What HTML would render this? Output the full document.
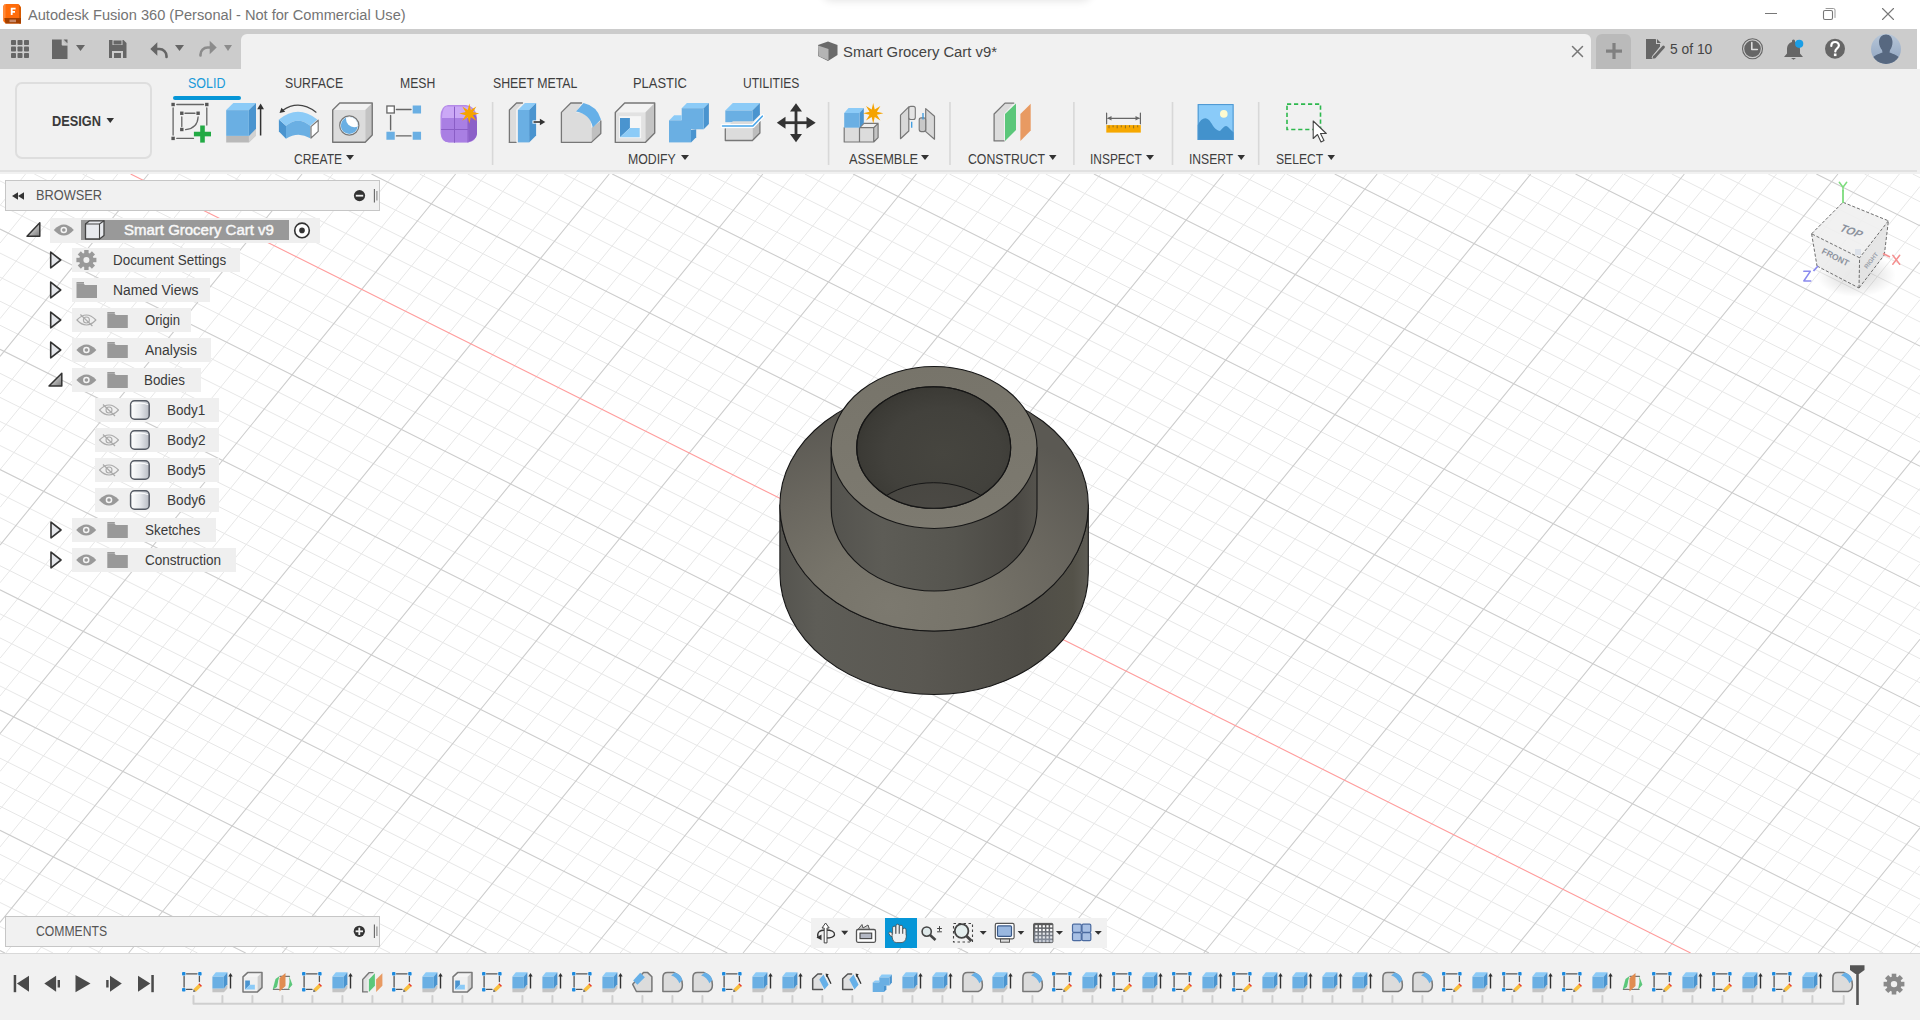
<!DOCTYPE html>
<html><head><meta charset="utf-8"><title>Autodesk Fusion 360</title><style>
*{margin:0;padding:0;box-sizing:border-box}
html,body{width:1920px;height:1020px;overflow:hidden;background:#fff;font-family:"Liberation Sans",sans-serif}
.abs{position:absolute}
.t{position:absolute;white-space:nowrap;line-height:1;transform-origin:0 0}
</style></head>
<body>
<svg class="abs" style="left:0;top:0" width="1920" height="1020"><path d="M25.59 174.00L0.00 205.44M56.31 174.00L0.00 243.17M87.03 174.00L0.00 280.91M117.74 174.00L0.00 318.64M179.18 174.00L0.00 394.11M209.90 174.00L0.00 431.85M240.61 174.00L0.00 469.58M271.33 174.00L0.00 507.32M332.77 174.00L0.00 582.79M363.49 174.00L0.00 620.52M394.20 174.00L0.00 658.26M424.92 174.00L0.00 695.99M486.36 174.00L-0.00 771.47M517.08 174.00L0.00 809.20M547.79 174.00L0.00 846.94M578.51 174.00L0.00 884.67M639.95 174.00L5.81 953.00M670.66 174.00L36.53 953.00M701.38 174.00L67.25 953.00M732.10 174.00L97.97 953.00M793.54 174.00L159.40 953.00M824.25 174.00L190.12 953.00M854.97 174.00L220.84 953.00M885.69 174.00L251.56 953.00M947.13 174.00L312.99 953.00M977.84 174.00L343.71 953.00M1008.56 174.00L374.43 953.00M1039.28 174.00L405.15 953.00M1100.71 174.00L466.58 953.00M1131.43 174.00L497.30 953.00M1162.15 174.00L528.02 953.00M1192.87 174.00L558.74 953.00M1254.30 174.00L620.17 953.00M1285.02 174.00L650.89 953.00M1315.74 174.00L681.61 953.00M1346.46 174.00L712.32 953.00M1407.89 174.00L773.76 953.00M1438.61 174.00L804.48 953.00M1469.33 174.00L835.20 953.00M1500.05 174.00L865.91 953.00M1561.48 174.00L927.35 953.00M1592.20 174.00L958.07 953.00M1622.92 174.00L988.79 953.00M1653.64 174.00L1019.50 953.00M1715.07 174.00L1080.94 953.00M1745.79 174.00L1111.66 953.00M1776.51 174.00L1142.37 953.00M1807.23 174.00L1173.09 953.00M1868.66 174.00L1234.53 953.00M1899.38 174.00L1265.25 953.00M1920.00 186.40L1295.96 953.00M1920.00 224.14L1326.68 953.00M1920.00 299.61L1388.12 953.00M1920.00 337.35L1418.84 953.00M1920.00 375.08L1449.55 953.00M1920.00 412.82L1480.27 953.00M1920.00 488.29L1541.71 953.00M1920.00 526.02L1572.42 953.00M1920.00 563.76L1603.14 953.00M1920.00 601.49L1633.86 953.00M1920.00 676.96L1695.30 953.00M1920.00 714.70L1726.01 953.00M1920.00 752.43L1756.73 953.00M1920.00 790.17L1787.45 953.00M1920.00 865.64L1848.89 953.00M1920.00 903.37L1879.60 953.00M1920.00 941.11L1910.32 953.00M1912.67 174.00L1920.00 177.66M1864.50 174.00L1920.00 201.71M1768.18 174.00L1920.00 249.81M1720.01 174.00L1920.00 273.87M1671.85 174.00L1920.00 297.92M1623.68 174.00L1920.00 321.97M1527.36 174.00L1920.00 370.07M1479.19 174.00L1920.00 394.12M1431.03 174.00L1920.00 418.17M1382.87 174.00L1920.00 442.22M1286.54 174.00L1920.00 490.33M1238.37 174.00L1920.00 514.38M1190.21 174.00L1920.00 538.43M1142.05 174.00L1920.00 562.48M1045.72 174.00L1920.00 610.58M997.55 174.00L1920.00 634.63M949.39 174.00L1920.00 658.68M901.23 174.00L1920.00 682.73M804.90 174.00L1920.00 730.84M756.73 174.00L1920.00 754.89M708.57 174.00L1920.00 778.94M660.41 174.00L1920.00 802.99M564.08 174.00L1920.00 851.09M515.91 174.00L1920.00 875.14M467.75 174.00L1920.00 899.19M419.59 174.00L1920.00 923.24M323.26 174.00L1883.26 953.00M275.10 174.00L1835.10 953.00M226.93 174.00L1786.93 953.00M178.77 174.00L1738.77 953.00M82.44 174.00L1642.44 953.00M34.28 174.00L1594.28 953.00M0.00 180.94L1546.11 953.00M0.00 204.99L1497.95 953.00M0.00 253.09L1401.62 953.00M0.00 277.14L1353.46 953.00M-0.00 301.19L1305.29 953.00M-0.00 325.24L1257.13 953.00M0.00 373.34L1160.80 953.00M0.00 397.39L1112.64 953.00M0.00 421.45L1064.47 953.00M0.00 445.50L1016.31 953.00M0.00 493.60L919.98 953.00M0.00 517.65L871.82 953.00M0.00 541.70L823.65 953.00M0.00 565.75L775.49 953.00M0.00 613.85L679.16 953.00M0.00 637.91L631.00 953.00M0.00 661.96L582.83 953.00M0.00 686.01L534.67 953.00M0.00 734.11L438.34 953.00M0.00 758.16L390.18 953.00M-0.00 782.21L342.01 953.00M0.00 806.26L293.85 953.00M0.00 854.37L197.52 953.00M0.00 878.42L149.36 953.00M0.00 902.47L101.19 953.00M0.00 926.52L53.03 953.00" stroke="#e7e7e7" stroke-width="1" fill="none"/><path d="M148.46 174.00L0.00 356.38M302.05 174.00L0.00 545.05M455.64 174.00L0.00 733.73M609.23 174.00L0.00 922.41M762.82 174.00L128.68 953.00M916.41 174.00L282.27 953.00M1070.00 174.00L435.86 953.00M1223.59 174.00L589.45 953.00M1377.18 174.00L743.04 953.00M1530.76 174.00L896.63 953.00M1684.35 174.00L1050.22 953.00M1837.94 174.00L1203.81 953.00M1920.00 261.87L1357.40 953.00M1920.00 450.55L1510.99 953.00M1920.00 639.23L1664.58 953.00M1920.00 827.90L1818.17 953.00M1816.34 174.00L1920.00 225.76M1575.52 174.00L1920.00 346.02M1334.70 174.00L1920.00 466.27M1093.88 174.00L1920.00 586.53M853.06 174.00L1920.00 706.78M612.24 174.00L1920.00 827.04M371.42 174.00L1920.00 947.30M0.00 229.04L1449.78 953.00M0.00 349.29L1208.96 953.00M0.00 469.55L968.15 953.00M0.00 589.80L727.33 953.00M0.00 710.06L486.51 953.00M-0.00 830.31L245.69 953.00M0.00 950.57L4.87 953.00" stroke="#cdcdcd" stroke-width="1.1" fill="none"/><path d="M130.60 174.00L1690.60 953.00" stroke="#ff9c9c" stroke-width="1.1" fill="none"/></svg>
<div class="abs" style="left:0;top:0;width:1920px;height:29px;background:#fff"></div>
<div class="abs" style="left:822px;top:-20px;width:270px;height:20px;background:#fff;box-shadow:0 1px 9px rgba(0,0,0,0.11);border-radius:10px"></div>
<div class="abs" style="left:0;top:29px;width:1917px;height:40px;background:#cccccc"></div>
<div class="abs" style="left:241px;top:34px;width:1350px;height:35px;background:#f1f1f1;border-radius:6px 6px 0 0"></div>
<div class="abs" style="left:1596px;top:34px;width:35px;height:35px;background:#bababa;border-radius:6px 6px 0 0"></div>
<div class="abs" style="left:0;top:69px;width:1920px;height:105px;background:#f1f1f1"></div>
<div class="abs" style="left:0;top:170px;width:1917px;height:2px;background:#e1e1e1"></div>
<div class="abs" style="left:15px;top:82px;width:137px;height:77px;border:2px solid #dedede;border-radius:7px"></div>
<div class="abs" style="left:173px;top:96px;width:68px;height:4px;background:#0696d7;border-radius:2px"></div>
<div class="abs" style="left:0;top:953px;width:1920px;height:67px;background:#f1f1f1;border-top:1.5px solid #d9d9d9"></div>
<div class="abs" style="left:5px;top:180px;width:375px;height:31px;background:#f1f1f1;border:1px solid #c6c6c6"></div>
<div class="abs" style="left:5px;top:916px;width:375px;height:31px;background:#f1f1f1;border:1px solid #c6c6c6"></div>
<div class="abs" style="left:50px;top:218px;width:270px;height:25px;background:#efefef"></div>
<div class="abs" style="left:72px;top:248px;width:168px;height:24px;background:#efefef"></div>
<div class="abs" style="left:72px;top:278px;width:138px;height:24px;background:#efefef"></div>
<div class="abs" style="left:72px;top:308px;width:119px;height:24px;background:#efefef"></div>
<div class="abs" style="left:72px;top:338px;width:139px;height:24px;background:#efefef"></div>
<div class="abs" style="left:72px;top:368px;width:129px;height:24px;background:#efefef"></div>
<div class="abs" style="left:95px;top:398px;width:124px;height:24px;background:#efefef"></div>
<div class="abs" style="left:95px;top:428px;width:124px;height:24px;background:#efefef"></div>
<div class="abs" style="left:95px;top:458px;width:124px;height:24px;background:#efefef"></div>
<div class="abs" style="left:95px;top:488px;width:124px;height:24px;background:#efefef"></div>
<div class="abs" style="left:72px;top:518px;width:144px;height:24px;background:#efefef"></div>
<div class="abs" style="left:72px;top:548px;width:164px;height:24px;background:#efefef"></div>
<div class="abs" style="left:81px;top:220px;width:208px;height:20px;background:#999999"></div>
<div class="abs" style="left:811px;top:918px;width:296px;height:30px;background:#f1f1f1"></div>
<div class="abs" style="left:885px;top:918px;width:32px;height:30px;background:#0696d7"></div>
<svg class="abs" style="left:0;top:0" width="1920" height="1020"><path d="M6 4H18.5L21 7.5V23.5H5.5L3.2 21V6.5Q3.5 4 6 4Z" fill="#ff6c0a"/><path d="M19 4.5L21 7.5V23.5H19Z" fill="#d65a00"/><path d="M4.5 18H21V23.5H5.5Z" fill="#a34000"/><path d="M3.2 6.5Q3.5 4.2 5.5 4V18H3.2Z" fill="#ff8a3a"/><rect x="9.50" y="19.60" width="6.50" height="2.60" fill="#c98a6a"/><path d="M10.8 7.8H15.6V9.6H12.6V11H15V12.7H12.6V15H10.8Z" fill="#ffffff"/><line x1="1765.00" y1="13.50" x2="1777.00" y2="13.50" stroke="#777" stroke-width="1"/><rect x="1823.50" y="10.50" width="9.00" height="9.00" fill="none" stroke="#777" stroke-width="1.1" rx="1.5"/><path d="M1826 8.5h7.5a1.5 1.5 0 0 1 1.5 1.5v7.5" fill="none" stroke="#999" stroke-width="1" stroke-linejoin="round" stroke-linecap="round"/><path d="M1882.5 8.5l11 11M1893.5 8.5l-11 11" fill="none" stroke="#777" stroke-width="1.1" stroke-linejoin="round" stroke-linecap="round"/><rect x="11.00" y="40.00" width="5.00" height="5.00" fill="#666666" rx="0.8"/><rect x="11.00" y="46.50" width="5.00" height="5.00" fill="#666666" rx="0.8"/><rect x="11.00" y="53.00" width="5.00" height="5.00" fill="#666666" rx="0.8"/><rect x="17.50" y="40.00" width="5.00" height="5.00" fill="#666666" rx="0.8"/><rect x="17.50" y="46.50" width="5.00" height="5.00" fill="#666666" rx="0.8"/><rect x="17.50" y="53.00" width="5.00" height="5.00" fill="#666666" rx="0.8"/><rect x="24.00" y="40.00" width="5.00" height="5.00" fill="#666666" rx="0.8"/><rect x="24.00" y="46.50" width="5.00" height="5.00" fill="#666666" rx="0.8"/><rect x="24.00" y="53.00" width="5.00" height="5.00" fill="#666666" rx="0.8"/><path d="M52 39.5h10l5.5 5.5v14h-15.5z" fill="#666666"/><path d="M62 39.5v5.5h5.5" fill="#cccccc"/><path d="M63.5 39.5l4 4v-4z" fill="#666666"/><path d="M62.2 39.5v5.6h5.3" fill="none" stroke="#cccccc" stroke-width="1.0" stroke-linejoin="round" stroke-linecap="round"/><polygon points="76.00,45.00 85.00,45.00 80.50,51.00" fill="#666666"/><path d="M109 40h14.5l3 3v15h-17.5z" fill="#666666"/><rect x="112.50" y="40.00" width="10.00" height="5.00" fill="#cccccc"/><rect x="113.50" y="40.50" width="8.00" height="4.00" fill="#666666"/><rect x="112.00" y="51.00" width="11.00" height="7.00" fill="#cccccc"/><rect x="114.00" y="53.00" width="7.00" height="5.00" fill="#666666"/><path d="M155 49 h4.5 a7 7 0 0 1 7 7 v1" fill="none" stroke="#666666" stroke-width="2.6" stroke-linejoin="round" stroke-linecap="round"/><polygon points="150.30,49.00 157.30,42.30 157.30,55.70" fill="#666666"/><polygon points="175.00,45.00 184.00,45.00 179.50,51.00" fill="#666666"/><path d="M212 47.5 h-4.5 a7 7 0 0 0 -7 7 v1" fill="none" stroke="#8c8c8c" stroke-width="2.6" stroke-linejoin="round" stroke-linecap="round"/><polygon points="216.70,47.50 209.70,40.80 209.70,54.20" fill="#8c8c8c"/><polygon points="224.00,45.00 232.00,45.00 228.00,51.00" fill="#8c8c8c"/><polygon points="818.00,45.00 828.00,41.50 837.50,45.00 837.50,55.00 828.00,61.00 818.00,56.00" fill="#6a6a6a"/><polygon points="818.00,45.50 828.50,49.00 828.50,60.50 818.50,56.00" fill="#b4b4b4"/><path d="M1572.5 46.5l10 10M1582.5 46.5l-10 10" fill="none" stroke="#777" stroke-width="1.5" stroke-linejoin="round" stroke-linecap="round"/><rect x="1606.00" y="49.50" width="16.00" height="3.20" fill="#808080"/><rect x="1612.40" y="43.00" width="3.20" height="16.00" fill="#808080"/><path d="M1646 39h9.5l4.5 4.5v3l-8 10v2.5h-6z" fill="#666666"/><path d="M1656 39v5h4.5" fill="#cccccc"/><polygon points="1657.00,39.00 1661.00,43.00 1657.00,43.00" fill="#666666"/><path d="M1654 57.5l9-10" fill="none" stroke="#cccccc" stroke-width="4.5" stroke-linejoin="round" stroke-linecap="round"/><path d="M1654.5 57l9-10" fill="none" stroke="#666666" stroke-width="2.8" stroke-linejoin="round" stroke-linecap="round"/><polygon points="1652.50,59.00 1653.00,55.50 1655.50,57.50" fill="#666666"/><circle cx="1752.50" cy="48.80" r="10.00" fill="none" stroke="#666" stroke-width="1.1"/><circle cx="1752.50" cy="48.80" r="8.30" fill="#666666"/><path d="M1751.8 42.5v7h5.5" fill="none" stroke="#dddddd" stroke-width="1.6" stroke-linejoin="round" stroke-linecap="round"/><path d="M1793.5 39.5c1 0 1.5 .8 1.5 1.5v1c3.5 1 5 4 5 7.5v4l3 3.5h-19l3-3.5v-4c0-3.5 1.5-6.5 5-7.5v-1c0-.7.5-1.5 1.5-1.5z" fill="#666666"/><path d="M1791 58h5l-2.5 1.8z" fill="#666666"/><circle cx="1799.20" cy="43.80" r="4.10" fill="#1a9ee6"/><circle cx="1835.00" cy="48.80" r="10.00" fill="#666666"/><path d="M1831.3 46c0-2.5 1.7-4 3.8-4s3.8 1.5 3.8 3.6c0 2.8-3.6 2.8-3.6 5.8" fill="none" stroke="#ffffff" stroke-width="2.2" stroke-linejoin="round" stroke-linecap="round" stroke-linecap="butt"/><rect x="1833.90" y="53.50" width="2.60" height="2.60" fill="#ffffff"/><defs><linearGradient id="avg" x1="0" y1="0" x2="0" y2="1"><stop offset="0" stop-color="#b7c6d8"/><stop offset="1" stop-color="#8fa4c0"/></linearGradient></defs><circle cx="1886.00" cy="49.00" r="15.00" fill="url(#avg)"/><clipPath id="avc"><circle cx="1886" cy="49" r="15"/></clipPath><path d="M1886 34.5c4 0 6.5 3 6.5 7.5 0 3.5-1 6-2.5 8l-.5 2.5c4 1.5 9 3 10 6l-3 10h-21l-3-10c1-3 6-4.5 10-6l-.5-2.5c-1.5-2-3-4.5-3-8 0-4.5 3-7.5 7-7.5z" fill="#576880" clip-path="url(#avc)"/><rect x="171.40" y="102.80" width="3.40" height="3.40" fill="#555555"/><rect x="205.10" y="102.80" width="3.40" height="3.40" fill="#555555"/><rect x="171.40" y="136.70" width="3.40" height="3.40" fill="#555555"/><rect x="180.10" y="111.55" width="3.40" height="3.40" fill="#555555"/><rect x="196.40" y="111.55" width="3.40" height="3.40" fill="#555555"/><rect x="180.10" y="127.80" width="3.40" height="3.40" fill="#555555"/><path d="M176.8 104.5H203.5M173.1 108V135M206.8 108V125M176.8 138.4H193.5M185 113.25H195M181.8 117V126.5M198.1 117Q197.5 128.5 185.6 129.6" fill="none" stroke="#666" stroke-width="1.3" stroke-linejoin="round" stroke-linecap="round"/><rect x="200.20" y="125.50" width="4.60" height="17.10" fill="#22aa44"/><rect x="193.90" y="131.75" width="17.10" height="4.60" fill="#22aa44"/><polygon points="226.20,135.90 248.90,135.90 256.00,128.80 256.00,135.50 248.90,142.60 226.20,142.60" fill="#b9b9b9"/><polygon points="248.90,135.90 256.00,128.80 256.00,135.50 248.90,142.60" fill="#d2d2d2"/><polygon points="226.20,110.10 233.30,103.00 256.00,103.00 248.90,110.10" fill="#8ccbf7"/><polygon points="248.90,110.10 256.00,103.00 256.00,128.80 248.90,135.90" fill="#4a94cf"/><polygon points="226.20,110.10 248.90,110.10 248.90,135.90 226.20,135.90" fill="#6aafe3"/><line x1="260.60" y1="108.00" x2="260.60" y2="135.50" stroke="#333333" stroke-width="1.5"/><polygon points="257.20,109.20 260.60,103.60 264.00,109.20" fill="#333333"/><path d="M316 112.2Q299 99 282.5 110.5" fill="none" stroke="#444" stroke-width="1.2" stroke-linejoin="round" stroke-linecap="round"/><polygon points="279.50,113.00 281.50,107.80 285.20,111.80" fill="#333"/><polygon points="278.90,119.50 286.00,125.80 286.00,138.80 278.90,131.50" fill="#4a94cf"/><path d="M278.9 119.5Q298 104 317.3 119.5L310.3 125.8Q298 115.5 286 125.8Z" fill="#8ccbf7"/><path d="M286 125.8Q298 115.5 310.3 125.8V138.3Q298 131 286 138.8Z" fill="#6aafe3"/><polygon points="311.00,126.60 318.20,120.20 318.20,131.40 311.00,138.00" fill="#ffffff" stroke="#777" stroke-width="1.2" stroke-linejoin="round"/><polygon points="332.70,110.10 339.75,103.00 372.25,103.00 365.20,110.10" fill="#f2f2f2"/><polygon points="365.20,110.10 372.25,103.00 372.25,135.10 365.20,142.20" fill="#c4c4c4"/><polygon points="332.70,110.10 365.20,110.10 365.20,142.20 332.70,142.20" fill="#dcdcdc"/><polygon points="332.70,110.10 339.75,103.00 372.25,103.00 372.25,135.10 365.20,142.20 332.70,142.20" fill="none" stroke="#777777" stroke-width="1.4" stroke-linejoin="round"/><circle cx="349.30" cy="125.50" r="9.60" fill="#ffffff" stroke="#777" stroke-width="1.2"/><clipPath id="hc"><circle cx="349.3" cy="125.5" r="8.5"/></clipPath><circle cx="349.30" cy="125.50" r="8.50" fill="#6aafe3"/><circle cx="354.20" cy="119.00" r="8.20" fill="#ffffff" clip-path="url(#hc)"/><rect x="386.90" y="106.00" width="7.40" height="7.00" fill="#ffffff" stroke="#666" stroke-width="1.3"/><rect x="412.70" y="105.50" width="8.35" height="8.00" fill="#6aafe3"/><rect x="386.40" y="131.75" width="8.35" height="8.00" fill="#6aafe3"/><rect x="412.70" y="131.75" width="8.35" height="8.00" fill="#6aafe3"/><path d="M396.4 109.5H411M390.6 115.5V129.7M396.4 135.9H411" fill="none" stroke="#666" stroke-width="1.4" stroke-linejoin="round" stroke-linecap="round"/><path d="M448 105H466Q476 106 477 118V134Q476 141 468 142.5H449Q441 142 440.5 133V116Q441 106 448 105Z" fill="#b48ae8"/><path d="M446 106.5H466Q473 107 474 113L468 118H442Q442.5 108 446 106.5Z" fill="#cba8f6"/><path d="M468 118L474.5 113Q477 117 477 122V134Q476 140 468.5 142Z" fill="#8c60c8"/><path d="M442 118H468V142.3H449Q442 142 441.5 134Z" fill="#a97fe3"/><path d="M454.5 107V142.3M441.5 129.5H468M468 118V142" fill="none" stroke="#8a5ec6" stroke-width="1.0" stroke-linejoin="round" stroke-linecap="round"/><polygon points="469.30,103.60 470.83,109.90 476.37,106.53 473.00,112.07 479.30,113.60 473.00,115.13 476.37,120.67 470.83,117.30 469.30,123.60 467.77,117.30 462.23,120.67 465.60,115.13 459.30,113.60 465.60,112.07 462.23,106.53 467.77,109.90" fill="#f5a300"/><line x1="492.60" y1="102.00" x2="492.60" y2="165.00" stroke="#d8d8d8" stroke-width="1.6"/><line x1="828.60" y1="102.00" x2="828.60" y2="165.00" stroke="#d8d8d8" stroke-width="1.6"/><line x1="950.00" y1="102.00" x2="950.00" y2="165.00" stroke="#d8d8d8" stroke-width="1.6"/><line x1="1073.90" y1="102.00" x2="1073.90" y2="165.00" stroke="#d8d8d8" stroke-width="1.6"/><line x1="1172.50" y1="102.00" x2="1172.50" y2="165.00" stroke="#d8d8d8" stroke-width="1.6"/><line x1="1258.70" y1="102.00" x2="1258.70" y2="165.00" stroke="#d8d8d8" stroke-width="1.6"/><polygon points="509.40,110.00 516.50,103.00 522.50,103.00 516.00,110.00 516.00,142.40 509.40,142.40" fill="#dcdcdc"/><path d="M509.4 142.4V110L516.5 103H522.5" fill="none" stroke="#777777" stroke-width="1.3" stroke-linejoin="round" stroke-linecap="round"/><path d="M509.4 142.4H516" fill="none" stroke="#777777" stroke-width="1.3" stroke-linejoin="round" stroke-linecap="round"/><polygon points="517.90,110.00 524.90,103.00 536.10,103.00 529.10,110.00" fill="#8ccbf7"/><polygon points="529.10,110.00 536.10,103.00 536.10,135.40 529.10,142.40" fill="#4a94cf"/><polygon points="517.90,110.00 529.10,110.00 529.10,142.40 517.90,142.40" fill="#6aafe3"/><line x1="532.50" y1="122.00" x2="541.00" y2="122.00" stroke="#ffffff" stroke-width="3.2"/><line x1="533.50" y1="122.00" x2="541.00" y2="122.00" stroke="#333333" stroke-width="1.6"/><polygon points="539.90,118.80 545.30,122.00 539.90,125.20" fill="#333333"/><polygon points="591.40,127.90 600.80,120.80 600.80,133.50 591.40,142.40" fill="#c0c0c0"/><path d="M561.4 142.4V112.4L570.8 103H581.6L576 112.4Q591.4 112.4 591.4 127.9V142.4Z" fill="#dcdcdc"/><path d="M576 111.5L583.5 103Q597 106 601 119.4L592.8 127.4Q590 114 576 111.5Z" fill="#66b0e8"/><path d="M561.4 112.4V142.4H591.4L600.8 133.5V120.8M561.4 112.4L570.8 103H581.6" fill="none" stroke="#777777" stroke-width="1.3" stroke-linejoin="round" stroke-linecap="round"/><polygon points="615.30,112.40 624.70,103.00 654.70,103.00 645.30,112.40" fill="#f3f3f3"/><polygon points="645.30,112.40 654.70,103.00 654.70,133.00 645.30,142.40" fill="#c4c4c4"/><polygon points="615.30,112.40 645.30,112.40 645.30,142.40 615.30,142.40" fill="#e2e2e2"/><polygon points="615.30,112.40 624.70,103.00 654.70,103.00 654.70,133.00 645.30,142.40 615.30,142.40" fill="none" stroke="#777777" stroke-width="1.4" stroke-linejoin="round"/><rect x="619.10" y="116.10" width="22.00" height="22.10" fill="#f6f6f6"/><polygon points="620.00,118.00 629.90,118.00 629.90,127.90 620.00,137.20" fill="#4a94cf"/><polygon points="629.90,127.90 639.70,127.90 639.70,137.20 620.00,137.20" fill="#8ccbf7"/><polygon points="681.70,108.20 686.90,103.00 708.90,103.00 703.70,108.20" fill="#8ccbf7"/><polygon points="703.70,108.20 708.90,103.00 708.90,124.10 703.70,129.30" fill="#4a94cf"/><polygon points="681.70,108.20 703.70,108.20 703.70,129.30 681.70,129.30" fill="#6aafe3"/><polygon points="669.00,120.40 674.20,115.20 681.70,115.20 681.70,120.40" fill="#8ccbf7"/><polygon points="691.00,130.00 696.20,129.30 696.20,137.20 691.00,142.40" fill="#4a94cf"/><rect x="669.00" y="120.40" width="22.00" height="22.00" fill="#6aafe3"/><rect x="681.70" y="120.40" width="9.30" height="9.00" fill="#6aafe3"/><polygon points="725.30,110.50 732.80,103.00 759.90,103.00 752.40,110.50" fill="#8ccbf7"/><polygon points="752.40,110.50 759.90,103.00 759.90,114.70 752.40,122.20" fill="#4a94cf"/><polygon points="725.30,110.50 752.40,110.50 752.40,122.20 725.30,122.20" fill="#6aafe3"/><polygon points="725.30,128.80 732.80,121.30 759.90,121.30 752.40,128.80" fill="#dcdcdc"/><polygon points="752.40,128.80 759.90,121.30 759.90,133.00 752.40,140.50" fill="#bdbdbd"/><polygon points="725.30,128.80 752.40,128.80 752.40,140.50 725.30,140.50" fill="#dcdcdc"/><path d="M725.3 128.8V140.5H752.4L759.9 133V121.5" fill="none" stroke="#777777" stroke-width="1.3" stroke-linejoin="round" stroke-linecap="round"/><path d="M722.5 126H752.9L762.3 116.2" fill="none" stroke="#ffffff" stroke-width="4" stroke-linejoin="round" stroke-linecap="round"/><path d="M722.5 126H752.9L762.3 116.2" fill="none" stroke="#4aa6ea" stroke-width="1.6" stroke-linejoin="round" stroke-linecap="round"/><line x1="796.00" y1="108.00" x2="796.00" y2="137.50" stroke="#333333" stroke-width="2.8"/><line x1="781.00" y1="122.70" x2="811.50" y2="122.70" stroke="#333333" stroke-width="2.8"/><polygon points="790.00,111.50 796.00,103.30 802.00,111.50" fill="#333333"/><polygon points="790.00,134.00 796.00,142.20 802.00,134.00" fill="#333333"/><polygon points="785.50,116.70 776.80,122.70 785.50,128.70" fill="#333333"/><polygon points="806.50,116.70 815.70,122.70 806.50,128.70" fill="#333333"/><polygon points="844.20,127.70 844.20,127.70 859.50,127.70 859.50,127.70" fill="#dcdcdc"/><polygon points="859.50,127.70 859.50,127.70 859.50,142.00 859.50,142.00" fill="#dcdcdc"/><polygon points="844.20,127.70 859.50,127.70 859.50,142.00 844.20,142.00" fill="#dcdcdc"/><polygon points="859.50,127.70 863.90,123.40 878.10,123.40 873.70,127.70" fill="#eeeeee"/><polygon points="873.70,127.70 878.10,123.40 878.10,137.70 873.70,142.00" fill="#c4c4c4"/><polygon points="859.50,127.70 873.70,127.70 873.70,142.00 859.50,142.00" fill="#dcdcdc"/><path d="M844.2 127.7V142H873.7L878.1 137.6V123.4H863.9L859.5 127.7M859.5 127.7V142M859.5 127.7H873.7L878.1 123.4M873.7 127.7V142" fill="none" stroke="#777777" stroke-width="1.2" stroke-linejoin="round" stroke-linecap="round"/><polygon points="844.20,113.00 848.50,108.00 863.80,108.00 859.50,113.00" fill="#8ccbf7"/><polygon points="859.50,113.00 863.80,108.00 863.80,122.70 859.50,127.70" fill="#4a94cf"/><polygon points="844.20,113.00 859.50,113.00 859.50,127.70 844.20,127.70" fill="#6aafe3"/><polygon points="873.20,103.00 874.73,109.50 880.41,105.99 876.90,111.67 883.40,113.20 876.90,114.73 880.41,120.41 874.73,116.90 873.20,123.40 871.67,116.90 865.99,120.41 869.50,114.73 863.00,113.20 869.50,111.67 865.99,105.99 871.67,109.50" fill="#f5a300"/><polygon points="900.50,115.10 908.80,106.90 908.80,131.00 900.50,138.70" fill="#d8d8d8" stroke="#777777" stroke-width="1.2" stroke-linejoin="round"/><rect x="908.80" y="106.40" width="6.50" height="13.10" fill="#e4e4e4" stroke="#777" stroke-width="1.1" rx="2"/><line x1="911.70" y1="121.70" x2="911.70" y2="127.70" stroke="#3a9ae0" stroke-width="1.3"/><polygon points="925.70,108.60 934.50,116.20 934.50,139.20 925.70,131.60" fill="#d8d8d8" stroke="#777777" stroke-width="1.2" stroke-linejoin="round"/><rect x="919.20" y="117.90" width="6.50" height="13.70" fill="#c8c8c8" stroke="#777" stroke-width="1.1" rx="2"/><line x1="923.00" y1="113.00" x2="923.00" y2="119.50" stroke="#3a9ae0" stroke-width="1.3"/><polygon points="994.10,114.00 1005.00,103.10 1013.80,103.10 1004.00,114.00 1004.00,140.90 994.10,140.90" fill="#dcdcdc"/><path d="M1004 140.9H994.1V114L1005 103.1H1013.8" fill="none" stroke="#777777" stroke-width="1.3" stroke-linejoin="round" stroke-linecap="round"/><polygon points="1005.00,114.00 1016.00,103.40 1016.00,129.90 1005.00,140.90" fill="#5bc77a"/><polygon points="1020.40,114.00 1030.70,103.70 1030.70,130.50 1020.40,140.90" fill="#e89a62"/><rect x="1106.30" y="125.10" width="34.50" height="7.50" fill="#f6a800"/><line x1="1109.00" y1="125.30" x2="1109.00" y2="128.30" stroke="#8a6a20" stroke-width="0.9"/><line x1="1113.10" y1="125.30" x2="1113.10" y2="127.30" stroke="#8a6a20" stroke-width="0.9"/><line x1="1117.20" y1="125.30" x2="1117.20" y2="128.30" stroke="#8a6a20" stroke-width="0.9"/><line x1="1121.30" y1="125.30" x2="1121.30" y2="127.30" stroke="#8a6a20" stroke-width="0.9"/><line x1="1125.40" y1="125.30" x2="1125.40" y2="128.30" stroke="#8a6a20" stroke-width="0.9"/><line x1="1129.50" y1="125.30" x2="1129.50" y2="127.30" stroke="#8a6a20" stroke-width="0.9"/><line x1="1133.60" y1="125.30" x2="1133.60" y2="128.30" stroke="#8a6a20" stroke-width="0.9"/><line x1="1137.70" y1="125.30" x2="1137.70" y2="127.30" stroke="#8a6a20" stroke-width="0.9"/><path d="M1106.6 113V123.8M1140.4 113V123.8M1108 118.3H1139" fill="none" stroke="#666" stroke-width="1.2" stroke-linejoin="round" stroke-linecap="round"/><polygon points="1107.30,118.30 1111.50,116.00 1111.50,120.60" fill="#666"/><polygon points="1139.70,118.30 1135.50,116.00 1135.50,120.60" fill="#666"/><rect x="1197.70" y="104.10" width="35.90" height="35.90" fill="#8acbf9"/><path d="M1197.7 125C1201 118 1206 116 1209.7 120.7C1213 125 1214.5 130 1220 131C1223 128 1225 124 1228 127C1230 129 1232 131 1233.6 132.5V140H1197.7Z" fill="#4392cc"/><rect x="1198.20" y="104.60" width="34.90" height="34.90" fill="none" stroke="#4a94cf" stroke-width="1"/><circle cx="1223.80" cy="113.90" r="3.80" fill="#fffbd0"/><rect x="1287.00" y="104.10" width="33.50" height="25.40" fill="none" stroke="#2db84d" stroke-width="1.6" stroke-dasharray="4.2 2.8"/><path d="M1313.2 121V138.5L1317.5 134.5L1321 142L1324 140.5L1320.5 133.5H1326.3Z" fill="#ffffff" stroke="#444" stroke-width="1.1" stroke-linejoin="round" stroke-linecap="round"/><polygon points="346.00,155.00 354.00,155.00 350.00,160.00" fill="#333333"/><polygon points="681.00,155.00 689.00,155.00 685.00,160.00" fill="#333333"/><polygon points="921.00,155.00 929.00,155.00 925.00,160.00" fill="#333333"/><polygon points="1049.00,155.00 1056.50,155.00 1052.75,160.00" fill="#333333"/><polygon points="1146.00,155.00 1154.00,155.00 1150.00,160.00" fill="#333333"/><polygon points="1237.50,155.00 1245.00,155.00 1241.25,160.00" fill="#333333"/><polygon points="1327.50,155.00 1335.00,155.00 1331.25,160.00" fill="#333333"/><polygon points="106.50,118.00 114.00,118.00 110.25,123.00" fill="#333333"/><polygon points="12.00,196.00 18.00,192.30 18.00,199.70" fill="#333"/><polygon points="18.00,196.00 24.00,192.30 24.00,199.70" fill="#333"/><circle cx="359.50" cy="195.60" r="5.60" fill="#333333"/><rect x="355.80" y="194.80" width="7.40" height="1.80" fill="#f1f1f1"/><line x1="374.40" y1="189.00" x2="374.40" y2="202.50" stroke="#666" stroke-width="1.1"/><line x1="376.90" y1="191.00" x2="376.90" y2="200.50" stroke="#888" stroke-width="1.1"/><circle cx="359.30" cy="931.30" r="5.60" fill="#333333"/><rect x="355.60" y="930.40" width="7.40" height="1.80" fill="#f1f1f1"/><rect x="358.40" y="927.60" width="1.80" height="7.40" fill="#f1f1f1"/><line x1="374.40" y1="924.50" x2="374.40" y2="938.00" stroke="#666" stroke-width="1.1"/><line x1="376.90" y1="926.50" x2="376.90" y2="936.00" stroke="#888" stroke-width="1.1"/><defs><linearGradient id="tg" x1="0" y1="0" x2="1" y2="1"><stop offset="0" stop-color="#ffffff"/><stop offset="1" stop-color="#777777"/></linearGradient></defs><polygon points="39.80,222.80 39.80,236.20 27.00,236.20" fill="url(#tg)" stroke="#333" stroke-width="1.5" stroke-linejoin="round"/><path d="M53.80 230.00Q63.80 219.00 73.80 230.00Q63.80 241.00 53.80 230.00Z" fill="#999999"/><circle cx="63.80" cy="230.00" r="3.30" fill="#f4f4f4"/><circle cx="63.80" cy="230.00" r="1.80" fill="#999999"/><polygon points="85.50,224.00 89.50,220.80 104.00,220.80 104.00,235.50 99.50,239.00 85.50,239.00" fill="#e8eaee" stroke="#444" stroke-width="1.3" stroke-linejoin="round"/><path d="M85.5 224H99.5V239M99.5 224L104 220.8" fill="none" stroke="#444" stroke-width="1.1" stroke-linejoin="round" stroke-linecap="round"/><circle cx="302.00" cy="230.40" r="7.30" fill="#ffffff" stroke="#333" stroke-width="1.6"/><circle cx="302.00" cy="230.40" r="2.80" fill="#333333"/><rect x="84.20" y="250.00" width="4.4" height="5" fill="#999999" transform="rotate(0 86.4 260)"/><rect x="84.20" y="250.00" width="4.4" height="5" fill="#999999" transform="rotate(45 86.4 260)"/><rect x="84.20" y="250.00" width="4.4" height="5" fill="#999999" transform="rotate(90 86.4 260)"/><rect x="84.20" y="250.00" width="4.4" height="5" fill="#999999" transform="rotate(135 86.4 260)"/><rect x="84.20" y="250.00" width="4.4" height="5" fill="#999999" transform="rotate(180 86.4 260)"/><rect x="84.20" y="250.00" width="4.4" height="5" fill="#999999" transform="rotate(225 86.4 260)"/><rect x="84.20" y="250.00" width="4.4" height="5" fill="#999999" transform="rotate(270 86.4 260)"/><rect x="84.20" y="250.00" width="4.4" height="5" fill="#999999" transform="rotate(315 86.4 260)"/><circle cx="86.40" cy="260.00" r="7.30" fill="#999999"/><circle cx="86.40" cy="260.00" r="3.00" fill="#efefef"/><path d="M76.50 283.50h7l1.5 1.5h12v13h-20.5z" fill="#999999"/><rect x="76.50" y="282.00" width="7.50" height="1.60" fill="#999999"/><path d="M76.90 320.00Q86.40 310.00 95.90 320.00Q86.40 330.00 76.90 320.00Z" fill="none" stroke="#aaaaaa" stroke-width="1.1" stroke-linejoin="round" stroke-linecap="round"/><circle cx="86.40" cy="320.00" r="3.00" fill="none" stroke="#aaaaaa" stroke-width="1.1"/><line x1="80.40" y1="314.50" x2="92.40" y2="326.00" stroke="#aaaaaa" stroke-width="1.2"/><path d="M107.30 313.50h7l1.5 1.5h12v13h-20.5z" fill="#999999"/><rect x="107.30" y="312.00" width="7.50" height="1.60" fill="#999999"/><path d="M76.40 350.00Q86.40 339.00 96.40 350.00Q86.40 361.00 76.40 350.00Z" fill="#999999"/><circle cx="86.40" cy="350.00" r="3.30" fill="#f4f4f4"/><circle cx="86.40" cy="350.00" r="1.80" fill="#999999"/><path d="M107.30 343.50h7l1.5 1.5h12v13h-20.5z" fill="#999999"/><rect x="107.30" y="342.00" width="7.50" height="1.60" fill="#999999"/><path d="M76.40 380.00Q86.40 369.00 96.40 380.00Q86.40 391.00 76.40 380.00Z" fill="#999999"/><circle cx="86.40" cy="380.00" r="3.30" fill="#f4f4f4"/><circle cx="86.40" cy="380.00" r="1.80" fill="#999999"/><path d="M107.30 373.50h7l1.5 1.5h12v13h-20.5z" fill="#999999"/><rect x="107.30" y="372.00" width="7.50" height="1.60" fill="#999999"/><polygon points="50.70,252.15 60.70,260.00 50.70,267.85" fill="#e4e6ea" stroke="#333" stroke-width="1.6" stroke-linejoin="round"/><polygon points="50.70,282.15 60.70,290.00 50.70,297.85" fill="#e4e6ea" stroke="#333" stroke-width="1.6" stroke-linejoin="round"/><polygon points="50.70,312.15 60.70,320.00 50.70,327.85" fill="#e4e6ea" stroke="#333" stroke-width="1.6" stroke-linejoin="round"/><polygon points="50.70,342.15 60.70,350.00 50.70,357.85" fill="#e4e6ea" stroke="#333" stroke-width="1.6" stroke-linejoin="round"/><defs><linearGradient id="tg" x1="0" y1="0" x2="1" y2="1"><stop offset="0" stop-color="#ffffff"/><stop offset="1" stop-color="#777777"/></linearGradient></defs><polygon points="61.80,373.20 61.80,386.00 49.00,386.00" fill="url(#tg)" stroke="#333" stroke-width="1.5" stroke-linejoin="round"/><path d="M99.50 410.00Q109.00 400.00 118.50 410.00Q109.00 420.00 99.50 410.00Z" fill="none" stroke="#aaaaaa" stroke-width="1.1" stroke-linejoin="round" stroke-linecap="round"/><circle cx="109.00" cy="410.00" r="3.00" fill="none" stroke="#aaaaaa" stroke-width="1.1"/><line x1="103.00" y1="404.50" x2="115.00" y2="416.00" stroke="#aaaaaa" stroke-width="1.2"/><defs><linearGradient id="bg" x1="0" y1="0" x2="1" y2="0"><stop offset="0" stop-color="#ffffff"/><stop offset="0.5" stop-color="#e6e8ec"/><stop offset="1" stop-color="#b8bcc4"/></linearGradient></defs><rect x="130.60" y="400.80" width="18.60" height="18.40" fill="url(#bg)" stroke="#555a64" stroke-width="1.5" rx="4"/><path d="M131.80 404.50Q139.80 401.50 147.80 404.50" fill="none" stroke="#ffffff" stroke-width="1.0" stroke-linejoin="round" stroke-linecap="round"/><path d="M99.50 440.00Q109.00 430.00 118.50 440.00Q109.00 450.00 99.50 440.00Z" fill="none" stroke="#aaaaaa" stroke-width="1.1" stroke-linejoin="round" stroke-linecap="round"/><circle cx="109.00" cy="440.00" r="3.00" fill="none" stroke="#aaaaaa" stroke-width="1.1"/><line x1="103.00" y1="434.50" x2="115.00" y2="446.00" stroke="#aaaaaa" stroke-width="1.2"/><defs><linearGradient id="bg" x1="0" y1="0" x2="1" y2="0"><stop offset="0" stop-color="#ffffff"/><stop offset="0.5" stop-color="#e6e8ec"/><stop offset="1" stop-color="#b8bcc4"/></linearGradient></defs><rect x="130.60" y="430.80" width="18.60" height="18.40" fill="url(#bg)" stroke="#555a64" stroke-width="1.5" rx="4"/><path d="M131.80 434.50Q139.80 431.50 147.80 434.50" fill="none" stroke="#ffffff" stroke-width="1.0" stroke-linejoin="round" stroke-linecap="round"/><path d="M99.50 470.00Q109.00 460.00 118.50 470.00Q109.00 480.00 99.50 470.00Z" fill="none" stroke="#aaaaaa" stroke-width="1.1" stroke-linejoin="round" stroke-linecap="round"/><circle cx="109.00" cy="470.00" r="3.00" fill="none" stroke="#aaaaaa" stroke-width="1.1"/><line x1="103.00" y1="464.50" x2="115.00" y2="476.00" stroke="#aaaaaa" stroke-width="1.2"/><defs><linearGradient id="bg" x1="0" y1="0" x2="1" y2="0"><stop offset="0" stop-color="#ffffff"/><stop offset="0.5" stop-color="#e6e8ec"/><stop offset="1" stop-color="#b8bcc4"/></linearGradient></defs><rect x="130.60" y="460.80" width="18.60" height="18.40" fill="url(#bg)" stroke="#555a64" stroke-width="1.5" rx="4"/><path d="M131.80 464.50Q139.80 461.50 147.80 464.50" fill="none" stroke="#ffffff" stroke-width="1.0" stroke-linejoin="round" stroke-linecap="round"/><path d="M99.00 500.00Q109.00 489.00 119.00 500.00Q109.00 511.00 99.00 500.00Z" fill="#999999"/><circle cx="109.00" cy="500.00" r="3.30" fill="#f4f4f4"/><circle cx="109.00" cy="500.00" r="1.80" fill="#999999"/><defs><linearGradient id="bg" x1="0" y1="0" x2="1" y2="0"><stop offset="0" stop-color="#ffffff"/><stop offset="0.5" stop-color="#e6e8ec"/><stop offset="1" stop-color="#b8bcc4"/></linearGradient></defs><rect x="130.60" y="490.80" width="18.60" height="18.40" fill="url(#bg)" stroke="#555a64" stroke-width="1.5" rx="4"/><path d="M131.80 494.50Q139.80 491.50 147.80 494.50" fill="none" stroke="#ffffff" stroke-width="1.0" stroke-linejoin="round" stroke-linecap="round"/><polygon points="51.00,522.15 61.00,530.00 51.00,537.85" fill="#e4e6ea" stroke="#333" stroke-width="1.6" stroke-linejoin="round"/><path d="M76.20 530.00Q86.20 519.00 96.20 530.00Q86.20 541.00 76.20 530.00Z" fill="#999999"/><circle cx="86.20" cy="530.00" r="3.30" fill="#f4f4f4"/><circle cx="86.20" cy="530.00" r="1.80" fill="#999999"/><path d="M107.30 523.50h7l1.5 1.5h12v13h-20.5z" fill="#999999"/><rect x="107.30" y="522.00" width="7.50" height="1.60" fill="#999999"/><polygon points="51.00,552.15 61.00,560.00 51.00,567.85" fill="#e4e6ea" stroke="#333" stroke-width="1.6" stroke-linejoin="round"/><path d="M76.20 560.00Q86.20 549.00 96.20 560.00Q86.20 571.00 76.20 560.00Z" fill="#999999"/><circle cx="86.20" cy="560.00" r="3.30" fill="#f4f4f4"/><circle cx="86.20" cy="560.00" r="1.80" fill="#999999"/><path d="M107.30 553.50h7l1.5 1.5h12v13h-20.5z" fill="#999999"/><rect x="107.30" y="552.00" width="7.50" height="1.60" fill="#999999"/><defs><linearGradient id="gbase" x1="0" y1="0" x2="1" y2="0"><stop offset="0" stop-color="#55544f"/><stop offset="0.12" stop-color="#5e5d57"/><stop offset="0.45" stop-color="#5a5852"/><stop offset="0.8" stop-color="#4f4d47"/><stop offset="0.95" stop-color="#545249"/><stop offset="1" stop-color="#5f5d56"/></linearGradient><linearGradient id="gupper" x1="0" y1="0" x2="1" y2="0"><stop offset="0" stop-color="#54534e"/><stop offset="0.25" stop-color="#5d5c56"/><stop offset="0.6" stop-color="#56554f"/><stop offset="0.9" stop-color="#4b4944"/><stop offset="1" stop-color="#55534d"/></linearGradient><radialGradient id="gring" cx="0.38" cy="0.95" r="0.85" fx="0.35" fy="0.9"><stop offset="0" stop-color="#7c796f"/><stop offset="0.3" stop-color="#77746a"/><stop offset="0.65" stop-color="#6a675f"/><stop offset="1" stop-color="#5b5953"/></radialGradient><linearGradient id="grim" x1="0" y1="0" x2="0" y2="1"><stop offset="0" stop-color="#77746a"/><stop offset="1" stop-color="#7d7a70"/></linearGradient><radialGradient id="ghole" cx="0.56" cy="0.55" r="0.62"><stop offset="0" stop-color="#46453f"/><stop offset="0.6" stop-color="#42413c"/><stop offset="0.85" stop-color="#3c3b36"/><stop offset="1" stop-color="#35342f"/></radialGradient><radialGradient id="gfloor" cx="0.5" cy="0.3" r="0.7"><stop offset="0" stop-color="#4c4a45"/><stop offset="1" stop-color="#44433e"/></radialGradient></defs><path d="M779.9000000000001 505.0L779.9000000000001 573.0A154.2 121.5 0 0 0 1088.3 573.0L1088.3 505.0A154.2 126.0 0 0 1 779.9000000000001 505.0Z" fill="url(#gbase)" stroke="#161616" stroke-width="1.1" stroke-linejoin="round" stroke-linecap="round"/><path d="M779.9000000000001 505.0A154.2 118.0 0 0 1 1088.3 505.0A154.2 126.0 0 0 1 779.9000000000001 505.0Z" fill="url(#gring)" stroke="#161616" stroke-width="1.1" stroke-linejoin="round" stroke-linecap="round"/><path d="M831.2 447.5L831.2 508.5A102.9 82.5 0 0 0 1037.0 508.5L1037.0 447.5Z" fill="url(#gupper)" stroke="#161616" stroke-width="1.1" stroke-linejoin="round" stroke-linecap="round"/><ellipse cx="934.1" cy="447.5" rx="102.9" ry="81.0" fill="url(#grim)" stroke="#161616" stroke-width="1.1"/><ellipse cx="933.7" cy="447.5" rx="77.0" ry="60.8" fill="url(#ghole)" stroke="#161616" stroke-width="1.1"/><clipPath id="holec"><ellipse cx="933.7" cy="447.5" rx="77.0" ry="60.8"/></clipPath><ellipse cx="933.7" cy="543.5" rx="77.0" ry="60.8" fill="url(#gfloor)" stroke="#161616" stroke-width="1" clip-path="url(#holec)"/><ellipse cx="933.7" cy="447.5" rx="77.0" ry="60.8" fill="none" stroke="#161616" stroke-width="1.1"/><defs><radialGradient id="vcsh" cx="0.5" cy="0.5" r="0.5"><stop offset="0" stop-color="#000" stop-opacity="0.16"/><stop offset="0.6" stop-color="#000" stop-opacity="0.07"/><stop offset="1" stop-color="#000" stop-opacity="0"/></radialGradient></defs><ellipse cx="1856" cy="275" rx="40" ry="22" fill="url(#vcsh)"/><g opacity="0.9"><polygon points="1811.60,233.80 1859.60,257.80 1859.00,288.00 1817.00,266.00" fill="#ececec"/><polygon points="1859.60,257.80 1888.40,220.80 1884.30,255.00 1859.00,288.00" fill="#e4e4e4"/><polygon points="1843.00,202.30 1888.40,220.80 1859.60,257.80 1811.60,233.80" fill="#f0f0f0"/></g><line x1="1843.00" y1="202.30" x2="1888.40" y2="220.80" stroke="#6f6f6f" stroke-width="1.0" stroke-dasharray="3.2 1.8"/><line x1="1888.40" y1="220.80" x2="1859.60" y2="257.80" stroke="#6f6f6f" stroke-width="1.0" stroke-dasharray="3.2 1.8"/><line x1="1859.60" y1="257.80" x2="1811.60" y2="233.80" stroke="#6f6f6f" stroke-width="1.0" stroke-dasharray="3.2 1.8"/><line x1="1811.60" y1="233.80" x2="1843.00" y2="202.30" stroke="#6f6f6f" stroke-width="1.0" stroke-dasharray="3.2 1.8"/><line x1="1811.60" y1="233.80" x2="1817.00" y2="266.00" stroke="#6f6f6f" stroke-width="1.0" stroke-dasharray="3.2 1.8"/><line x1="1817.00" y1="266.00" x2="1859.00" y2="288.00" stroke="#6f6f6f" stroke-width="1.0" stroke-dasharray="3.2 1.8"/><line x1="1859.00" y1="288.00" x2="1859.60" y2="257.80" stroke="#6f6f6f" stroke-width="1.0" stroke-dasharray="3.2 1.8"/><line x1="1859.00" y1="288.00" x2="1884.30" y2="255.00" stroke="#6f6f6f" stroke-width="1.0" stroke-dasharray="3.2 1.8"/><line x1="1884.30" y1="255.00" x2="1888.40" y2="220.80" stroke="#6f6f6f" stroke-width="1.0" stroke-dasharray="3.2 1.8"/><rect x="1855.00" y="249.00" width="6.00" height="6.00" fill="#dde2ea"/><text x="0" y="0" font-family="Liberation Sans" font-size="11" font-weight="bold" fill="#8d939e" transform="translate(1838.5 230.5) rotate(20) skewX(-18)">TOP</text><text x="0" y="0" font-family="Liberation Sans" font-size="8.5" font-weight="bold" fill="#8d939e" transform="translate(1821 253) rotate(27)">FRONT</text><text x="0" y="0" font-family="Liberation Sans" font-size="6" font-weight="bold" fill="#9aa0aa" transform="translate(1867 269) rotate(-52)">RIGHT</text><line x1="1843.00" y1="190.00" x2="1843.00" y2="203.00" stroke="#7ddc7d" stroke-width="1.8"/><path d="M1839.3 182.3L1843 187.3M1846.7 182.3L1843 187.3V191" fill="none" stroke="#7ddc7d" stroke-width="1.5" stroke-linejoin="round" stroke-linecap="round"/><line x1="1883.00" y1="253.50" x2="1890.00" y2="257.00" stroke="#f59090" stroke-width="1.8"/><path d="M1892.8 255.3L1899.7 264.3M1899.7 255.3L1892.8 264.3" fill="none" stroke="#f59090" stroke-width="1.5" stroke-linejoin="round" stroke-linecap="round"/><line x1="1818.00" y1="266.00" x2="1813.50" y2="271.00" stroke="#8a8aee" stroke-width="1.8"/><path d="M1803.8 271.3H1810.3L1803.8 281H1810.8" fill="none" stroke="#8a8aee" stroke-width="1.5" stroke-linejoin="round" stroke-linecap="round"/><path d="M818 937.5Q816 930 825.5 930Q835 930 834.5 935Q833.5 938 826 938" fill="none" stroke="#333333" stroke-width="1.3" stroke-linejoin="round" stroke-linecap="round"/><polygon points="816.50,937.40 821.50,934.50 821.50,940.30" fill="#333333"/><path d="M824.2 942.5V928H822L825.6 923L829.2 928H827V942.5Z" fill="#ffffff" stroke="#444" stroke-width="1.0" stroke-linejoin="round" stroke-linecap="round"/><polygon points="841.20,930.80 848.20,930.80 844.70,935.10" fill="#333333"/><path d="M858 929.5L862 924.5L863 928L868 925L869.5 929.5" fill="#cccccc" stroke="#555" stroke-width="1.0" stroke-linejoin="round" stroke-linecap="round"/><rect x="856.50" y="929.50" width="19.00" height="12.80" fill="#ffffff" stroke="#555" stroke-width="1.3" rx="1.5"/><rect x="860.00" y="933.10" width="11.70" height="5.50" fill="#b4b8c4" stroke="#444" stroke-width="1.1"/><path d="M891 936.5L889 933.8C888.2 932.6 889.6 931.4 890.8 932.3L893.4 934.6Z" fill="#eef0f2" stroke="#4a4a4a" stroke-width="0.8" stroke-linejoin="round" stroke-linecap="round"/><rect x="892.60" y="926.20" width="3.20" height="9.80" fill="#eef0f2" stroke="#4a4a4a" stroke-width="0.8" rx="1.6"/><rect x="896.00" y="924.20" width="3.20" height="11.30" fill="#eef0f2" stroke="#4a4a4a" stroke-width="0.8" rx="1.6"/><rect x="899.40" y="925.20" width="3.20" height="10.30" fill="#eef0f2" stroke="#4a4a4a" stroke-width="0.8" rx="1.6"/><rect x="902.80" y="928.20" width="3.20" height="8.30" fill="#eef0f2" stroke="#4a4a4a" stroke-width="0.8" rx="1.6"/><path d="M892.3 934.5H906V937.5C906 940.5 904 942.6 901 942.6H896.5C894 942.6 892.3 940 892.3 937.5Z" fill="#eef0f2" stroke="#4a4a4a" stroke-width="0.8" stroke-linejoin="round" stroke-linecap="round"/><rect x="892.80" y="933.80" width="12.80" height="3.60" fill="#eef0f2"/><circle cx="926.70" cy="931.60" r="4.60" fill="#dfe9ea" stroke="#444" stroke-width="1.6"/><line x1="930.00" y1="935.00" x2="935.50" y2="940.00" stroke="#444" stroke-width="2.6"/><path d="M937.5 928.5H941.5M939.5 926.5V930.5M937.5 931.8H941.5" fill="none" stroke="#444" stroke-width="1.0" stroke-linejoin="round" stroke-linecap="round"/><rect x="953.50" y="923.50" width="19.00" height="18.50" fill="none" stroke="#444" stroke-width="1.1" stroke-dasharray="2.5 2.5"/><circle cx="961.60" cy="931.00" r="6.80" fill="#e4eeee" stroke="#444" stroke-width="1.8"/><line x1="966.50" y1="936.00" x2="971.50" y2="941.00" stroke="#444" stroke-width="2.8"/><polygon points="979.70,931.10 986.70,931.10 983.20,934.80" fill="#333333"/><rect x="995.30" y="923.40" width="18.80" height="15.40" fill="#ffffff" stroke="#555" stroke-width="1.2" rx="1.5"/><rect x="997.50" y="925.90" width="14.00" height="10.40" fill="#9ab8e0" stroke="#3a5a8a" stroke-width="1.2" rx="1"/><rect x="1000.50" y="939.00" width="9.00" height="3.20" fill="#dddddd" stroke="#555" stroke-width="1.0"/><polygon points="1017.60,931.10 1024.30,931.10 1020.95,934.80" fill="#333333"/><defs><linearGradient id="ggr" x1="0" y1="0" x2="0" y2="1"><stop offset="0" stop-color="#555"/><stop offset="1" stop-color="#8a93a3"/></linearGradient></defs><rect x="1033.60" y="923.40" width="19.30" height="19.20" fill="url(#ggr)" stroke="#555" stroke-width="1.0" rx="1"/><rect x="1035.30" y="925.20" width="2.20" height="2.20" fill="#ffffff"/><rect x="1035.30" y="928.90" width="2.20" height="2.20" fill="#ffffff"/><rect x="1035.30" y="932.60" width="2.20" height="2.20" fill="#e6e8ec"/><rect x="1035.30" y="936.30" width="2.20" height="2.20" fill="#e6e8ec"/><rect x="1035.30" y="940.00" width="2.20" height="2.20" fill="#c8ccd4"/><rect x="1039.00" y="925.20" width="2.20" height="2.20" fill="#ffffff"/><rect x="1039.00" y="928.90" width="2.20" height="2.20" fill="#ffffff"/><rect x="1039.00" y="932.60" width="2.20" height="2.20" fill="#e6e8ec"/><rect x="1039.00" y="936.30" width="2.20" height="2.20" fill="#e6e8ec"/><rect x="1039.00" y="940.00" width="2.20" height="2.20" fill="#c8ccd4"/><rect x="1042.70" y="925.20" width="2.20" height="2.20" fill="#ffffff"/><rect x="1042.70" y="928.90" width="2.20" height="2.20" fill="#ffffff"/><rect x="1042.70" y="932.60" width="2.20" height="2.20" fill="#e6e8ec"/><rect x="1042.70" y="936.30" width="2.20" height="2.20" fill="#e6e8ec"/><rect x="1042.70" y="940.00" width="2.20" height="2.20" fill="#c8ccd4"/><rect x="1046.40" y="925.20" width="2.20" height="2.20" fill="#ffffff"/><rect x="1046.40" y="928.90" width="2.20" height="2.20" fill="#ffffff"/><rect x="1046.40" y="932.60" width="2.20" height="2.20" fill="#e6e8ec"/><rect x="1046.40" y="936.30" width="2.20" height="2.20" fill="#e6e8ec"/><rect x="1046.40" y="940.00" width="2.20" height="2.20" fill="#c8ccd4"/><rect x="1050.10" y="925.20" width="2.20" height="2.20" fill="#ffffff"/><rect x="1050.10" y="928.90" width="2.20" height="2.20" fill="#ffffff"/><rect x="1050.10" y="932.60" width="2.20" height="2.20" fill="#e6e8ec"/><rect x="1050.10" y="936.30" width="2.20" height="2.20" fill="#e6e8ec"/><rect x="1050.10" y="940.00" width="2.20" height="2.20" fill="#c8ccd4"/><polygon points="1055.90,931.10 1063.00,931.10 1059.45,934.80" fill="#333333"/><rect x="1072.50" y="924.20" width="8.80" height="8.10" fill="#a8c0e4" stroke="#4a6aa0" stroke-width="1.2" rx="1.2"/><rect x="1082.00" y="924.20" width="8.80" height="8.10" fill="#a8c0e4" stroke="#4a6aa0" stroke-width="1.2" rx="1.2"/><rect x="1072.50" y="932.60" width="8.80" height="8.10" fill="#a8c0e4" stroke="#4a6aa0" stroke-width="1.2" rx="1.2"/><rect x="1082.00" y="932.60" width="8.80" height="8.10" fill="#a8c0e4" stroke="#4a6aa0" stroke-width="1.2" rx="1.2"/><polygon points="1094.70,931.10 1101.80,931.10 1098.25,934.80" fill="#333333"/><rect x="13.70" y="975.00" width="2.50" height="17.20" fill="#4a4a4a"/><polygon points="16.90,983.60 29.00,975.70 29.00,991.80" fill="#4a4a4a"/><polygon points="44.30,983.60 56.10,975.70 56.10,991.80" fill="#4a4a4a"/><rect x="57.60" y="980.00" width="2.40" height="7.50" fill="#4a4a4a"/><polygon points="75.50,975.00 90.50,983.60 75.50,992.20" fill="#4a4a4a"/><rect x="106.20" y="980.00" width="2.40" height="7.50" fill="#4a4a4a"/><polygon points="110.00,975.70 121.80,983.60 110.00,991.80" fill="#4a4a4a"/><polygon points="138.00,975.70 150.30,983.60 138.00,991.80" fill="#4a4a4a"/><rect x="151.30" y="975.00" width="2.50" height="17.20" fill="#4a4a4a"/><path d="M193.5 996V1003.8H1843.7V996" fill="none" stroke="#cfcfcf" stroke-width="2" stroke-linejoin="round" stroke-linecap="round" stroke-linecap="butt"/><path d="M222.4 996V1003M252.4 996V1003M282.4 996V1003M312.4 996V1003M342.4 996V1003M372.4 996V1003M402.4 996V1003M432.4 996V1003M462.4 996V1003M492.4 996V1003M522.4 996V1003M552.4 996V1003M582.4 996V1003M612.4 996V1003M642.4 996V1003M672.4 996V1003M702.4 996V1003M732.4 996V1003M762.4 996V1003M792.4 996V1003M822.4 996V1003M852.4 996V1003M882.4 996V1003M912.4 996V1003M942.4 996V1003M972.4 996V1003M1002.4 996V1003M1032.4 996V1003M1062.4 996V1003M1092.4 996V1003M1122.4 996V1003M1152.4 996V1003M1182.4 996V1003M1212.4 996V1003M1242.4 996V1003M1272.4 996V1003M1302.4 996V1003M1332.4 996V1003M1362.4 996V1003M1392.4 996V1003M1422.4 996V1003M1452.4 996V1003M1482.4 996V1003M1512.4 996V1003M1542.4 996V1003M1572.4 996V1003M1602.4 996V1003M1632.4 996V1003M1662.4 996V1003M1692.4 996V1003M1722.4 996V1003M1752.4 996V1003M1782.4 996V1003M1812.4 996V1003" fill="none" stroke="#cfcfcf" stroke-width="2" stroke-linejoin="round" stroke-linecap="round" stroke-linecap="butt"/><path d="M186.5 973.8H197M184.1 976.5V987M199.4 976.5V981.5M186.5 989.4H192" fill="none" stroke="#555" stroke-width="1.3" stroke-linejoin="round" stroke-linecap="round"/><rect x="182.05" y="972.10" width="3.40" height="3.40" fill="#1a8ae0" rx="0.8"/><rect x="198.20" y="972.10" width="3.40" height="3.40" fill="#1a8ae0" rx="0.8"/><rect x="182.05" y="988.05" width="3.40" height="3.40" fill="#1a8ae0" rx="0.8"/><line x1="200.30" y1="984.90" x2="194.60" y2="990.60" stroke="#f8c040" stroke-width="3.6"/><line x1="200.60" y1="984.60" x2="199.80" y2="985.40" stroke="#e83030" stroke-width="3.6"/><polygon points="193.20,992.00 193.60,989.60 195.60,991.40" fill="#555"/><polygon points="212.40,988.50 223.90,988.50 227.40,984.75 227.40,988.50 223.90,992.30 212.40,992.30" fill="#c4c4c4"/><polygon points="212.40,976.60 215.90,972.25 227.40,972.25 223.90,976.60" fill="#8ccbf7"/><polygon points="223.90,976.60 227.40,972.25 227.40,984.15 223.90,988.50" fill="#4a94cf"/><polygon points="212.40,976.60 223.90,976.60 223.90,988.50 212.40,988.50" fill="#6aafe3"/><line x1="230.50" y1="975.50" x2="230.50" y2="988.50" stroke="#333" stroke-width="1.4"/><polygon points="228.30,976.50 230.50,973.00 232.70,976.50" fill="#333"/><polygon points="243.00,976.90 247.60,972.60 262.00,972.60 257.40,976.90" fill="#f4f4f4"/><polygon points="257.40,976.90 262.00,972.60 262.00,987.60 257.40,991.90" fill="#cfcfcf"/><polygon points="243.00,976.90 257.40,976.90 257.40,991.90 243.00,991.90" fill="#f0f0f0"/><polygon points="243.00,976.90 247.60,972.60 262.00,972.60 262.00,987.60 257.40,991.90 243.00,991.90" fill="none" stroke="#777777" stroke-width="1.5" stroke-linejoin="round"/><polygon points="245.20,980.40 249.90,980.40 249.90,984.75 245.20,989.40" fill="#4a94cf"/><polygon points="249.90,984.75 254.90,984.75 254.90,989.60 245.20,989.60" fill="#8ccbf7"/><path d="M280 976.3H289.5M273.5 989.4H289" fill="none" stroke="#777" stroke-width="1.3" stroke-linejoin="round" stroke-linecap="round"/><polygon points="272.70,989.40 275.50,979.10 279.25,976.30 277.00,987.00" fill="#5bc77a"/><polygon points="289.25,976.30 292.40,984.75 288.00,989.75 289.50,982.00" fill="#5bc77a"/><polygon points="278.50,980.00 284.00,978.50 284.00,989.00 278.50,989.00" fill="#e8e8e8"/><polygon points="279.50,991.60 279.50,977.90 285.50,972.90 285.50,986.00" fill="#e08c50"/><path d="M306.5 973.8H317M304.1 976.5V987M319.4 976.5V981.5M306.5 989.4H312" fill="none" stroke="#555" stroke-width="1.3" stroke-linejoin="round" stroke-linecap="round"/><rect x="302.05" y="972.10" width="3.40" height="3.40" fill="#1a8ae0" rx="0.8"/><rect x="318.20" y="972.10" width="3.40" height="3.40" fill="#1a8ae0" rx="0.8"/><rect x="302.05" y="988.05" width="3.40" height="3.40" fill="#1a8ae0" rx="0.8"/><line x1="320.30" y1="984.90" x2="314.60" y2="990.60" stroke="#f8c040" stroke-width="3.6"/><line x1="320.60" y1="984.60" x2="319.80" y2="985.40" stroke="#e83030" stroke-width="3.6"/><polygon points="313.20,992.00 313.60,989.60 315.60,991.40" fill="#555"/><polygon points="332.40,988.50 343.90,988.50 347.40,984.75 347.40,988.50 343.90,992.30 332.40,992.30" fill="#c4c4c4"/><polygon points="332.40,976.60 335.90,972.25 347.40,972.25 343.90,976.60" fill="#8ccbf7"/><polygon points="343.90,976.60 347.40,972.25 347.40,984.15 343.90,988.50" fill="#4a94cf"/><polygon points="332.40,976.60 343.90,976.60 343.90,988.50 332.40,988.50" fill="#6aafe3"/><line x1="350.50" y1="975.50" x2="350.50" y2="988.50" stroke="#333" stroke-width="1.4"/><polygon points="348.30,976.50 350.50,973.00 352.70,976.50" fill="#333"/><polygon points="362.70,979.40 369.25,972.60 373.00,972.60 367.40,979.40 367.40,991.90 362.70,991.90" fill="#e2e2e2"/><path d="M367.4 991.9H362.7V979.4L369.25 972.6H373" fill="none" stroke="#777" stroke-width="1.4" stroke-linejoin="round" stroke-linecap="round"/><polygon points="368.90,979.40 374.90,973.20 374.90,985.70 368.90,991.90" fill="#5bc77a"/><polygon points="376.10,979.40 382.40,973.20 382.40,985.70 376.10,991.90" fill="#e89a62"/><path d="M396.5 973.8H407M394.1 976.5V987M409.4 976.5V981.5M396.5 989.4H402" fill="none" stroke="#555" stroke-width="1.3" stroke-linejoin="round" stroke-linecap="round"/><rect x="392.05" y="972.10" width="3.40" height="3.40" fill="#1a8ae0" rx="0.8"/><rect x="408.20" y="972.10" width="3.40" height="3.40" fill="#1a8ae0" rx="0.8"/><rect x="392.05" y="988.05" width="3.40" height="3.40" fill="#1a8ae0" rx="0.8"/><line x1="410.30" y1="984.90" x2="404.60" y2="990.60" stroke="#f8c040" stroke-width="3.6"/><line x1="410.60" y1="984.60" x2="409.80" y2="985.40" stroke="#e83030" stroke-width="3.6"/><polygon points="403.20,992.00 403.60,989.60 405.60,991.40" fill="#555"/><polygon points="422.40,988.50 433.90,988.50 437.40,984.75 437.40,988.50 433.90,992.30 422.40,992.30" fill="#c4c4c4"/><polygon points="422.40,976.60 425.90,972.25 437.40,972.25 433.90,976.60" fill="#8ccbf7"/><polygon points="433.90,976.60 437.40,972.25 437.40,984.15 433.90,988.50" fill="#4a94cf"/><polygon points="422.40,976.60 433.90,976.60 433.90,988.50 422.40,988.50" fill="#6aafe3"/><line x1="440.50" y1="975.50" x2="440.50" y2="988.50" stroke="#333" stroke-width="1.4"/><polygon points="438.30,976.50 440.50,973.00 442.70,976.50" fill="#333"/><polygon points="453.00,976.90 457.60,972.60 472.00,972.60 467.40,976.90" fill="#f4f4f4"/><polygon points="467.40,976.90 472.00,972.60 472.00,987.60 467.40,991.90" fill="#cfcfcf"/><polygon points="453.00,976.90 467.40,976.90 467.40,991.90 453.00,991.90" fill="#f0f0f0"/><polygon points="453.00,976.90 457.60,972.60 472.00,972.60 472.00,987.60 467.40,991.90 453.00,991.90" fill="none" stroke="#777777" stroke-width="1.5" stroke-linejoin="round"/><polygon points="455.20,980.40 459.90,980.40 459.90,984.75 455.20,989.40" fill="#4a94cf"/><polygon points="459.90,984.75 464.90,984.75 464.90,989.60 455.20,989.60" fill="#8ccbf7"/><path d="M486.5 973.8H497M484.1 976.5V987M499.4 976.5V981.5M486.5 989.4H492" fill="none" stroke="#555" stroke-width="1.3" stroke-linejoin="round" stroke-linecap="round"/><rect x="482.05" y="972.10" width="3.40" height="3.40" fill="#1a8ae0" rx="0.8"/><rect x="498.20" y="972.10" width="3.40" height="3.40" fill="#1a8ae0" rx="0.8"/><rect x="482.05" y="988.05" width="3.40" height="3.40" fill="#1a8ae0" rx="0.8"/><line x1="500.30" y1="984.90" x2="494.60" y2="990.60" stroke="#f8c040" stroke-width="3.6"/><line x1="500.60" y1="984.60" x2="499.80" y2="985.40" stroke="#e83030" stroke-width="3.6"/><polygon points="493.20,992.00 493.60,989.60 495.60,991.40" fill="#555"/><polygon points="512.40,988.50 523.90,988.50 527.40,984.75 527.40,988.50 523.90,992.30 512.40,992.30" fill="#c4c4c4"/><polygon points="512.40,976.60 515.90,972.25 527.40,972.25 523.90,976.60" fill="#8ccbf7"/><polygon points="523.90,976.60 527.40,972.25 527.40,984.15 523.90,988.50" fill="#4a94cf"/><polygon points="512.40,976.60 523.90,976.60 523.90,988.50 512.40,988.50" fill="#6aafe3"/><line x1="530.50" y1="975.50" x2="530.50" y2="988.50" stroke="#333" stroke-width="1.4"/><polygon points="528.30,976.50 530.50,973.00 532.70,976.50" fill="#333"/><polygon points="542.40,988.50 553.90,988.50 557.40,984.75 557.40,988.50 553.90,992.30 542.40,992.30" fill="#c4c4c4"/><polygon points="542.40,976.60 545.90,972.25 557.40,972.25 553.90,976.60" fill="#8ccbf7"/><polygon points="553.90,976.60 557.40,972.25 557.40,984.15 553.90,988.50" fill="#4a94cf"/><polygon points="542.40,976.60 553.90,976.60 553.90,988.50 542.40,988.50" fill="#6aafe3"/><line x1="560.50" y1="975.50" x2="560.50" y2="988.50" stroke="#333" stroke-width="1.4"/><polygon points="558.30,976.50 560.50,973.00 562.70,976.50" fill="#333"/><path d="M576.5 973.8H587M574.1 976.5V987M589.4 976.5V981.5M576.5 989.4H582" fill="none" stroke="#555" stroke-width="1.3" stroke-linejoin="round" stroke-linecap="round"/><rect x="572.05" y="972.10" width="3.40" height="3.40" fill="#1a8ae0" rx="0.8"/><rect x="588.20" y="972.10" width="3.40" height="3.40" fill="#1a8ae0" rx="0.8"/><rect x="572.05" y="988.05" width="3.40" height="3.40" fill="#1a8ae0" rx="0.8"/><line x1="590.30" y1="984.90" x2="584.60" y2="990.60" stroke="#f8c040" stroke-width="3.6"/><line x1="590.60" y1="984.60" x2="589.80" y2="985.40" stroke="#e83030" stroke-width="3.6"/><polygon points="583.20,992.00 583.60,989.60 585.60,991.40" fill="#555"/><polygon points="602.40,988.50 613.90,988.50 617.40,984.75 617.40,988.50 613.90,992.30 602.40,992.30" fill="#c4c4c4"/><polygon points="602.40,976.60 605.90,972.25 617.40,972.25 613.90,976.60" fill="#8ccbf7"/><polygon points="613.90,976.60 617.40,972.25 617.40,984.15 613.90,988.50" fill="#4a94cf"/><polygon points="602.40,976.60 613.90,976.60 613.90,988.50 602.40,988.50" fill="#6aafe3"/><line x1="620.50" y1="975.50" x2="620.50" y2="988.50" stroke="#333" stroke-width="1.4"/><polygon points="618.30,976.50 620.50,973.00 622.70,976.50" fill="#333"/><path d="M632.7 984.3L636.4 991.5H651.9V976.8L647.7 972.6H643.5L632.7 984.3Z" fill="#dcdcdc" stroke="#777" stroke-width="1.5" stroke-linejoin="round" stroke-linecap="round"/><polygon points="633.20,980.50 640.20,972.80 644.90,977.25 637.40,984.75" fill="#66b0e8"/><path d="M662.9 991.5V977.7Q662.9 972.6 667.4 972.6H674Q682.4 976 682.4 985Q682.4 990 678.2 991.5Z" fill="#dcdcdc" stroke="#777" stroke-width="1.5" stroke-linejoin="round" stroke-linecap="round"/><path d="M671.1 975.4L674.9 972.6Q681 974.5 682.4 980L679.3 983.3Q677 977 671.1 975.4Z" fill="#66b0e8"/><path d="M692.9 991.5V977.7Q692.9 972.6 697.4 972.6H704Q712.4 976 712.4 985Q712.4 990 708.2 991.5Z" fill="#dcdcdc" stroke="#777" stroke-width="1.5" stroke-linejoin="round" stroke-linecap="round"/><path d="M701.1 975.4L704.9 972.6Q711 974.5 712.4 980L709.3 983.3Q707 977 701.1 975.4Z" fill="#66b0e8"/><path d="M726.5 973.8H737M724.1 976.5V987M739.4 976.5V981.5M726.5 989.4H732" fill="none" stroke="#555" stroke-width="1.3" stroke-linejoin="round" stroke-linecap="round"/><rect x="722.05" y="972.10" width="3.40" height="3.40" fill="#1a8ae0" rx="0.8"/><rect x="738.20" y="972.10" width="3.40" height="3.40" fill="#1a8ae0" rx="0.8"/><rect x="722.05" y="988.05" width="3.40" height="3.40" fill="#1a8ae0" rx="0.8"/><line x1="740.30" y1="984.90" x2="734.60" y2="990.60" stroke="#f8c040" stroke-width="3.6"/><line x1="740.60" y1="984.60" x2="739.80" y2="985.40" stroke="#e83030" stroke-width="3.6"/><polygon points="733.20,992.00 733.60,989.60 735.60,991.40" fill="#555"/><polygon points="752.40,988.50 763.90,988.50 767.40,984.75 767.40,988.50 763.90,992.30 752.40,992.30" fill="#c4c4c4"/><polygon points="752.40,976.60 755.90,972.25 767.40,972.25 763.90,976.60" fill="#8ccbf7"/><polygon points="763.90,976.60 767.40,972.25 767.40,984.15 763.90,988.50" fill="#4a94cf"/><polygon points="752.40,976.60 763.90,976.60 763.90,988.50 752.40,988.50" fill="#6aafe3"/><line x1="770.50" y1="975.50" x2="770.50" y2="988.50" stroke="#333" stroke-width="1.4"/><polygon points="768.30,976.50 770.50,973.00 772.70,976.50" fill="#333"/><polygon points="782.40,988.50 793.90,988.50 797.40,984.75 797.40,988.50 793.90,992.30 782.40,992.30" fill="#c4c4c4"/><polygon points="782.40,976.60 785.90,972.25 797.40,972.25 793.90,976.60" fill="#8ccbf7"/><polygon points="793.90,976.60 797.40,972.25 797.40,984.15 793.90,988.50" fill="#4a94cf"/><polygon points="782.40,976.60 793.90,976.60 793.90,988.50 782.40,988.50" fill="#6aafe3"/><line x1="800.50" y1="975.50" x2="800.50" y2="988.50" stroke="#333" stroke-width="1.4"/><polygon points="798.30,976.50 800.50,973.00 802.70,976.50" fill="#333"/><path d="M822.5 989.4H812.7V978.7L817.8 974H821.6" fill="#e0e0e0" stroke="#555" stroke-width="1.5" stroke-linejoin="round" stroke-linecap="round"/><polygon points="819.25,979.40 823.50,974.40 828.60,984.75 824.40,989.40" fill="#66b0e8"/><line x1="826.90" y1="975.40" x2="831.00" y2="983.80" stroke="#333" stroke-width="1.3"/><polygon points="825.60,973.50 828.80,974.30 826.20,977.20" fill="#333"/><path d="M852.5 989.4H842.7V978.7L847.8 974H851.6" fill="#e0e0e0" stroke="#555" stroke-width="1.5" stroke-linejoin="round" stroke-linecap="round"/><polygon points="849.25,979.40 853.50,974.40 858.60,984.75 854.40,989.40" fill="#66b0e8"/><line x1="856.90" y1="975.40" x2="861.00" y2="983.80" stroke="#333" stroke-width="1.3"/><polygon points="855.60,973.50 858.80,974.30 856.20,977.20" fill="#333"/><polygon points="879.25,977.50 881.65,974.40 891.90,974.40 889.50,977.50" fill="#8ccbf7"/><polygon points="889.50,977.50 891.90,974.40 891.90,982.40 889.50,985.50" fill="#4a94cf"/><polygon points="879.25,977.50 889.50,977.50 889.50,985.50 879.25,985.50" fill="#6aafe3"/><polygon points="872.70,982.50 875.00,980.50 879.25,980.50 879.25,982.50" fill="#8ccbf7"/><polygon points="884.00,985.50 886.40,985.50 886.40,989.50 884.00,992.00" fill="#4a94cf"/><rect x="872.70" y="982.50" width="11.30" height="9.50" fill="#6aafe3"/><rect x="879.25" y="982.50" width="4.75" height="3.00" fill="#6aafe3"/><polygon points="902.40,988.50 913.90,988.50 917.40,984.75 917.40,988.50 913.90,992.30 902.40,992.30" fill="#c4c4c4"/><polygon points="902.40,976.60 905.90,972.25 917.40,972.25 913.90,976.60" fill="#8ccbf7"/><polygon points="913.90,976.60 917.40,972.25 917.40,984.15 913.90,988.50" fill="#4a94cf"/><polygon points="902.40,976.60 913.90,976.60 913.90,988.50 902.40,988.50" fill="#6aafe3"/><line x1="920.50" y1="975.50" x2="920.50" y2="988.50" stroke="#333" stroke-width="1.4"/><polygon points="918.30,976.50 920.50,973.00 922.70,976.50" fill="#333"/><polygon points="932.40,988.50 943.90,988.50 947.40,984.75 947.40,988.50 943.90,992.30 932.40,992.30" fill="#c4c4c4"/><polygon points="932.40,976.60 935.90,972.25 947.40,972.25 943.90,976.60" fill="#8ccbf7"/><polygon points="943.90,976.60 947.40,972.25 947.40,984.15 943.90,988.50" fill="#4a94cf"/><polygon points="932.40,976.60 943.90,976.60 943.90,988.50 932.40,988.50" fill="#6aafe3"/><line x1="950.50" y1="975.50" x2="950.50" y2="988.50" stroke="#333" stroke-width="1.4"/><polygon points="948.30,976.50 950.50,973.00 952.70,976.50" fill="#333"/><path d="M962.9 991.5V977.7Q962.9 972.6 967.4 972.6H974Q982.4 976 982.4 985Q982.4 990 978.2 991.5Z" fill="#dcdcdc" stroke="#777" stroke-width="1.5" stroke-linejoin="round" stroke-linecap="round"/><path d="M971.1 975.4L974.9 972.6Q981 974.5 982.4 980L979.3 983.3Q977 977 971.1 975.4Z" fill="#66b0e8"/><polygon points="992.40,988.50 1003.90,988.50 1007.40,984.75 1007.40,988.50 1003.90,992.30 992.40,992.30" fill="#c4c4c4"/><polygon points="992.40,976.60 995.90,972.25 1007.40,972.25 1003.90,976.60" fill="#8ccbf7"/><polygon points="1003.90,976.60 1007.40,972.25 1007.40,984.15 1003.90,988.50" fill="#4a94cf"/><polygon points="992.40,976.60 1003.90,976.60 1003.90,988.50 992.40,988.50" fill="#6aafe3"/><line x1="1010.50" y1="975.50" x2="1010.50" y2="988.50" stroke="#333" stroke-width="1.4"/><polygon points="1008.30,976.50 1010.50,973.00 1012.70,976.50" fill="#333"/><path d="M1022.9 991.5V977.7Q1022.9 972.6 1027.4 972.6H1034Q1042.4 976 1042.4 985Q1042.4 990 1038.2 991.5Z" fill="#dcdcdc" stroke="#777" stroke-width="1.5" stroke-linejoin="round" stroke-linecap="round"/><path d="M1031.1 975.4L1034.9 972.6Q1041 974.5 1042.4 980L1039.3 983.3Q1037 977 1031.1 975.4Z" fill="#66b0e8"/><path d="M1056.5 973.8H1067M1054.1 976.5V987M1069.4 976.5V981.5M1056.5 989.4H1062" fill="none" stroke="#555" stroke-width="1.3" stroke-linejoin="round" stroke-linecap="round"/><rect x="1052.05" y="972.10" width="3.40" height="3.40" fill="#1a8ae0" rx="0.8"/><rect x="1068.20" y="972.10" width="3.40" height="3.40" fill="#1a8ae0" rx="0.8"/><rect x="1052.05" y="988.05" width="3.40" height="3.40" fill="#1a8ae0" rx="0.8"/><line x1="1070.30" y1="984.90" x2="1064.60" y2="990.60" stroke="#f8c040" stroke-width="3.6"/><line x1="1070.60" y1="984.60" x2="1069.80" y2="985.40" stroke="#e83030" stroke-width="3.6"/><polygon points="1063.20,992.00 1063.60,989.60 1065.60,991.40" fill="#555"/><polygon points="1082.40,988.50 1093.90,988.50 1097.40,984.75 1097.40,988.50 1093.90,992.30 1082.40,992.30" fill="#c4c4c4"/><polygon points="1082.40,976.60 1085.90,972.25 1097.40,972.25 1093.90,976.60" fill="#8ccbf7"/><polygon points="1093.90,976.60 1097.40,972.25 1097.40,984.15 1093.90,988.50" fill="#4a94cf"/><polygon points="1082.40,976.60 1093.90,976.60 1093.90,988.50 1082.40,988.50" fill="#6aafe3"/><line x1="1100.50" y1="975.50" x2="1100.50" y2="988.50" stroke="#333" stroke-width="1.4"/><polygon points="1098.30,976.50 1100.50,973.00 1102.70,976.50" fill="#333"/><path d="M1116.5 973.8H1127M1114.1 976.5V987M1129.4 976.5V981.5M1116.5 989.4H1122" fill="none" stroke="#555" stroke-width="1.3" stroke-linejoin="round" stroke-linecap="round"/><rect x="1112.05" y="972.10" width="3.40" height="3.40" fill="#1a8ae0" rx="0.8"/><rect x="1128.20" y="972.10" width="3.40" height="3.40" fill="#1a8ae0" rx="0.8"/><rect x="1112.05" y="988.05" width="3.40" height="3.40" fill="#1a8ae0" rx="0.8"/><line x1="1130.30" y1="984.90" x2="1124.60" y2="990.60" stroke="#f8c040" stroke-width="3.6"/><line x1="1130.60" y1="984.60" x2="1129.80" y2="985.40" stroke="#e83030" stroke-width="3.6"/><polygon points="1123.20,992.00 1123.60,989.60 1125.60,991.40" fill="#555"/><polygon points="1142.40,988.50 1153.90,988.50 1157.40,984.75 1157.40,988.50 1153.90,992.30 1142.40,992.30" fill="#c4c4c4"/><polygon points="1142.40,976.60 1145.90,972.25 1157.40,972.25 1153.90,976.60" fill="#8ccbf7"/><polygon points="1153.90,976.60 1157.40,972.25 1157.40,984.15 1153.90,988.50" fill="#4a94cf"/><polygon points="1142.40,976.60 1153.90,976.60 1153.90,988.50 1142.40,988.50" fill="#6aafe3"/><line x1="1160.50" y1="975.50" x2="1160.50" y2="988.50" stroke="#333" stroke-width="1.4"/><polygon points="1158.30,976.50 1160.50,973.00 1162.70,976.50" fill="#333"/><path d="M1176.5 973.8H1187M1174.1 976.5V987M1189.4 976.5V981.5M1176.5 989.4H1182" fill="none" stroke="#555" stroke-width="1.3" stroke-linejoin="round" stroke-linecap="round"/><rect x="1172.05" y="972.10" width="3.40" height="3.40" fill="#1a8ae0" rx="0.8"/><rect x="1188.20" y="972.10" width="3.40" height="3.40" fill="#1a8ae0" rx="0.8"/><rect x="1172.05" y="988.05" width="3.40" height="3.40" fill="#1a8ae0" rx="0.8"/><line x1="1190.30" y1="984.90" x2="1184.60" y2="990.60" stroke="#f8c040" stroke-width="3.6"/><line x1="1190.60" y1="984.60" x2="1189.80" y2="985.40" stroke="#e83030" stroke-width="3.6"/><polygon points="1183.20,992.00 1183.60,989.60 1185.60,991.40" fill="#555"/><polygon points="1202.40,988.50 1213.90,988.50 1217.40,984.75 1217.40,988.50 1213.90,992.30 1202.40,992.30" fill="#c4c4c4"/><polygon points="1202.40,976.60 1205.90,972.25 1217.40,972.25 1213.90,976.60" fill="#8ccbf7"/><polygon points="1213.90,976.60 1217.40,972.25 1217.40,984.15 1213.90,988.50" fill="#4a94cf"/><polygon points="1202.40,976.60 1213.90,976.60 1213.90,988.50 1202.40,988.50" fill="#6aafe3"/><line x1="1220.50" y1="975.50" x2="1220.50" y2="988.50" stroke="#333" stroke-width="1.4"/><polygon points="1218.30,976.50 1220.50,973.00 1222.70,976.50" fill="#333"/><path d="M1236.5 973.8H1247M1234.1 976.5V987M1249.4 976.5V981.5M1236.5 989.4H1242" fill="none" stroke="#555" stroke-width="1.3" stroke-linejoin="round" stroke-linecap="round"/><rect x="1232.05" y="972.10" width="3.40" height="3.40" fill="#1a8ae0" rx="0.8"/><rect x="1248.20" y="972.10" width="3.40" height="3.40" fill="#1a8ae0" rx="0.8"/><rect x="1232.05" y="988.05" width="3.40" height="3.40" fill="#1a8ae0" rx="0.8"/><line x1="1250.30" y1="984.90" x2="1244.60" y2="990.60" stroke="#f8c040" stroke-width="3.6"/><line x1="1250.60" y1="984.60" x2="1249.80" y2="985.40" stroke="#e83030" stroke-width="3.6"/><polygon points="1243.20,992.00 1243.60,989.60 1245.60,991.40" fill="#555"/><polygon points="1262.40,988.50 1273.90,988.50 1277.40,984.75 1277.40,988.50 1273.90,992.30 1262.40,992.30" fill="#c4c4c4"/><polygon points="1262.40,976.60 1265.90,972.25 1277.40,972.25 1273.90,976.60" fill="#8ccbf7"/><polygon points="1273.90,976.60 1277.40,972.25 1277.40,984.15 1273.90,988.50" fill="#4a94cf"/><polygon points="1262.40,976.60 1273.90,976.60 1273.90,988.50 1262.40,988.50" fill="#6aafe3"/><line x1="1280.50" y1="975.50" x2="1280.50" y2="988.50" stroke="#333" stroke-width="1.4"/><polygon points="1278.30,976.50 1280.50,973.00 1282.70,976.50" fill="#333"/><polygon points="1292.40,988.50 1303.90,988.50 1307.40,984.75 1307.40,988.50 1303.90,992.30 1292.40,992.30" fill="#c4c4c4"/><polygon points="1292.40,976.60 1295.90,972.25 1307.40,972.25 1303.90,976.60" fill="#8ccbf7"/><polygon points="1303.90,976.60 1307.40,972.25 1307.40,984.15 1303.90,988.50" fill="#4a94cf"/><polygon points="1292.40,976.60 1303.90,976.60 1303.90,988.50 1292.40,988.50" fill="#6aafe3"/><line x1="1310.50" y1="975.50" x2="1310.50" y2="988.50" stroke="#333" stroke-width="1.4"/><polygon points="1308.30,976.50 1310.50,973.00 1312.70,976.50" fill="#333"/><polygon points="1322.40,988.50 1333.90,988.50 1337.40,984.75 1337.40,988.50 1333.90,992.30 1322.40,992.30" fill="#c4c4c4"/><polygon points="1322.40,976.60 1325.90,972.25 1337.40,972.25 1333.90,976.60" fill="#8ccbf7"/><polygon points="1333.90,976.60 1337.40,972.25 1337.40,984.15 1333.90,988.50" fill="#4a94cf"/><polygon points="1322.40,976.60 1333.90,976.60 1333.90,988.50 1322.40,988.50" fill="#6aafe3"/><line x1="1340.50" y1="975.50" x2="1340.50" y2="988.50" stroke="#333" stroke-width="1.4"/><polygon points="1338.30,976.50 1340.50,973.00 1342.70,976.50" fill="#333"/><polygon points="1352.40,988.50 1363.90,988.50 1367.40,984.75 1367.40,988.50 1363.90,992.30 1352.40,992.30" fill="#c4c4c4"/><polygon points="1352.40,976.60 1355.90,972.25 1367.40,972.25 1363.90,976.60" fill="#8ccbf7"/><polygon points="1363.90,976.60 1367.40,972.25 1367.40,984.15 1363.90,988.50" fill="#4a94cf"/><polygon points="1352.40,976.60 1363.90,976.60 1363.90,988.50 1352.40,988.50" fill="#6aafe3"/><line x1="1370.50" y1="975.50" x2="1370.50" y2="988.50" stroke="#333" stroke-width="1.4"/><polygon points="1368.30,976.50 1370.50,973.00 1372.70,976.50" fill="#333"/><path d="M1382.9 991.5V977.7Q1382.9 972.6 1387.4 972.6H1394Q1402.4 976 1402.4 985Q1402.4 990 1398.2 991.5Z" fill="#dcdcdc" stroke="#777" stroke-width="1.5" stroke-linejoin="round" stroke-linecap="round"/><path d="M1391.1 975.4L1394.9 972.6Q1401 974.5 1402.4 980L1399.3 983.3Q1397 977 1391.1 975.4Z" fill="#66b0e8"/><path d="M1412.9 991.5V977.7Q1412.9 972.6 1417.4 972.6H1424Q1432.4 976 1432.4 985Q1432.4 990 1428.2 991.5Z" fill="#dcdcdc" stroke="#777" stroke-width="1.5" stroke-linejoin="round" stroke-linecap="round"/><path d="M1421.1 975.4L1424.9 972.6Q1431 974.5 1432.4 980L1429.3 983.3Q1427 977 1421.1 975.4Z" fill="#66b0e8"/><path d="M1446.5 973.8H1457M1444.1 976.5V987M1459.4 976.5V981.5M1446.5 989.4H1452" fill="none" stroke="#555" stroke-width="1.3" stroke-linejoin="round" stroke-linecap="round"/><rect x="1442.05" y="972.10" width="3.40" height="3.40" fill="#1a8ae0" rx="0.8"/><rect x="1458.20" y="972.10" width="3.40" height="3.40" fill="#1a8ae0" rx="0.8"/><rect x="1442.05" y="988.05" width="3.40" height="3.40" fill="#1a8ae0" rx="0.8"/><line x1="1460.30" y1="984.90" x2="1454.60" y2="990.60" stroke="#f8c040" stroke-width="3.6"/><line x1="1460.60" y1="984.60" x2="1459.80" y2="985.40" stroke="#e83030" stroke-width="3.6"/><polygon points="1453.20,992.00 1453.60,989.60 1455.60,991.40" fill="#555"/><polygon points="1472.40,988.50 1483.90,988.50 1487.40,984.75 1487.40,988.50 1483.90,992.30 1472.40,992.30" fill="#c4c4c4"/><polygon points="1472.40,976.60 1475.90,972.25 1487.40,972.25 1483.90,976.60" fill="#8ccbf7"/><polygon points="1483.90,976.60 1487.40,972.25 1487.40,984.15 1483.90,988.50" fill="#4a94cf"/><polygon points="1472.40,976.60 1483.90,976.60 1483.90,988.50 1472.40,988.50" fill="#6aafe3"/><line x1="1490.50" y1="975.50" x2="1490.50" y2="988.50" stroke="#333" stroke-width="1.4"/><polygon points="1488.30,976.50 1490.50,973.00 1492.70,976.50" fill="#333"/><path d="M1506.5 973.8H1517M1504.1 976.5V987M1519.4 976.5V981.5M1506.5 989.4H1512" fill="none" stroke="#555" stroke-width="1.3" stroke-linejoin="round" stroke-linecap="round"/><rect x="1502.05" y="972.10" width="3.40" height="3.40" fill="#1a8ae0" rx="0.8"/><rect x="1518.20" y="972.10" width="3.40" height="3.40" fill="#1a8ae0" rx="0.8"/><rect x="1502.05" y="988.05" width="3.40" height="3.40" fill="#1a8ae0" rx="0.8"/><line x1="1520.30" y1="984.90" x2="1514.60" y2="990.60" stroke="#f8c040" stroke-width="3.6"/><line x1="1520.60" y1="984.60" x2="1519.80" y2="985.40" stroke="#e83030" stroke-width="3.6"/><polygon points="1513.20,992.00 1513.60,989.60 1515.60,991.40" fill="#555"/><polygon points="1532.40,988.50 1543.90,988.50 1547.40,984.75 1547.40,988.50 1543.90,992.30 1532.40,992.30" fill="#c4c4c4"/><polygon points="1532.40,976.60 1535.90,972.25 1547.40,972.25 1543.90,976.60" fill="#8ccbf7"/><polygon points="1543.90,976.60 1547.40,972.25 1547.40,984.15 1543.90,988.50" fill="#4a94cf"/><polygon points="1532.40,976.60 1543.90,976.60 1543.90,988.50 1532.40,988.50" fill="#6aafe3"/><line x1="1550.50" y1="975.50" x2="1550.50" y2="988.50" stroke="#333" stroke-width="1.4"/><polygon points="1548.30,976.50 1550.50,973.00 1552.70,976.50" fill="#333"/><path d="M1566.5 973.8H1577M1564.1 976.5V987M1579.4 976.5V981.5M1566.5 989.4H1572" fill="none" stroke="#555" stroke-width="1.3" stroke-linejoin="round" stroke-linecap="round"/><rect x="1562.05" y="972.10" width="3.40" height="3.40" fill="#1a8ae0" rx="0.8"/><rect x="1578.20" y="972.10" width="3.40" height="3.40" fill="#1a8ae0" rx="0.8"/><rect x="1562.05" y="988.05" width="3.40" height="3.40" fill="#1a8ae0" rx="0.8"/><line x1="1580.30" y1="984.90" x2="1574.60" y2="990.60" stroke="#f8c040" stroke-width="3.6"/><line x1="1580.60" y1="984.60" x2="1579.80" y2="985.40" stroke="#e83030" stroke-width="3.6"/><polygon points="1573.20,992.00 1573.60,989.60 1575.60,991.40" fill="#555"/><polygon points="1592.40,988.50 1603.90,988.50 1607.40,984.75 1607.40,988.50 1603.90,992.30 1592.40,992.30" fill="#c4c4c4"/><polygon points="1592.40,976.60 1595.90,972.25 1607.40,972.25 1603.90,976.60" fill="#8ccbf7"/><polygon points="1603.90,976.60 1607.40,972.25 1607.40,984.15 1603.90,988.50" fill="#4a94cf"/><polygon points="1592.40,976.60 1603.90,976.60 1603.90,988.50 1592.40,988.50" fill="#6aafe3"/><line x1="1610.50" y1="975.50" x2="1610.50" y2="988.50" stroke="#333" stroke-width="1.4"/><polygon points="1608.30,976.50 1610.50,973.00 1612.70,976.50" fill="#333"/><path d="M1630 976.3H1639.5M1623.5 989.4H1639" fill="none" stroke="#777" stroke-width="1.3" stroke-linejoin="round" stroke-linecap="round"/><polygon points="1622.70,989.40 1625.50,979.10 1629.25,976.30 1627.00,987.00" fill="#5bc77a"/><polygon points="1639.25,976.30 1642.40,984.75 1638.00,989.75 1639.50,982.00" fill="#5bc77a"/><polygon points="1628.50,980.00 1634.00,978.50 1634.00,989.00 1628.50,989.00" fill="#e8e8e8"/><polygon points="1629.50,991.60 1629.50,977.90 1635.50,972.90 1635.50,986.00" fill="#e08c50"/><path d="M1656.5 973.8H1667M1654.1 976.5V987M1669.4 976.5V981.5M1656.5 989.4H1662" fill="none" stroke="#555" stroke-width="1.3" stroke-linejoin="round" stroke-linecap="round"/><rect x="1652.05" y="972.10" width="3.40" height="3.40" fill="#1a8ae0" rx="0.8"/><rect x="1668.20" y="972.10" width="3.40" height="3.40" fill="#1a8ae0" rx="0.8"/><rect x="1652.05" y="988.05" width="3.40" height="3.40" fill="#1a8ae0" rx="0.8"/><line x1="1670.30" y1="984.90" x2="1664.60" y2="990.60" stroke="#f8c040" stroke-width="3.6"/><line x1="1670.60" y1="984.60" x2="1669.80" y2="985.40" stroke="#e83030" stroke-width="3.6"/><polygon points="1663.20,992.00 1663.60,989.60 1665.60,991.40" fill="#555"/><polygon points="1682.40,988.50 1693.90,988.50 1697.40,984.75 1697.40,988.50 1693.90,992.30 1682.40,992.30" fill="#c4c4c4"/><polygon points="1682.40,976.60 1685.90,972.25 1697.40,972.25 1693.90,976.60" fill="#8ccbf7"/><polygon points="1693.90,976.60 1697.40,972.25 1697.40,984.15 1693.90,988.50" fill="#4a94cf"/><polygon points="1682.40,976.60 1693.90,976.60 1693.90,988.50 1682.40,988.50" fill="#6aafe3"/><line x1="1700.50" y1="975.50" x2="1700.50" y2="988.50" stroke="#333" stroke-width="1.4"/><polygon points="1698.30,976.50 1700.50,973.00 1702.70,976.50" fill="#333"/><path d="M1716.5 973.8H1727M1714.1 976.5V987M1729.4 976.5V981.5M1716.5 989.4H1722" fill="none" stroke="#555" stroke-width="1.3" stroke-linejoin="round" stroke-linecap="round"/><rect x="1712.05" y="972.10" width="3.40" height="3.40" fill="#1a8ae0" rx="0.8"/><rect x="1728.20" y="972.10" width="3.40" height="3.40" fill="#1a8ae0" rx="0.8"/><rect x="1712.05" y="988.05" width="3.40" height="3.40" fill="#1a8ae0" rx="0.8"/><line x1="1730.30" y1="984.90" x2="1724.60" y2="990.60" stroke="#f8c040" stroke-width="3.6"/><line x1="1730.60" y1="984.60" x2="1729.80" y2="985.40" stroke="#e83030" stroke-width="3.6"/><polygon points="1723.20,992.00 1723.60,989.60 1725.60,991.40" fill="#555"/><polygon points="1742.40,988.50 1753.90,988.50 1757.40,984.75 1757.40,988.50 1753.90,992.30 1742.40,992.30" fill="#c4c4c4"/><polygon points="1742.40,976.60 1745.90,972.25 1757.40,972.25 1753.90,976.60" fill="#8ccbf7"/><polygon points="1753.90,976.60 1757.40,972.25 1757.40,984.15 1753.90,988.50" fill="#4a94cf"/><polygon points="1742.40,976.60 1753.90,976.60 1753.90,988.50 1742.40,988.50" fill="#6aafe3"/><line x1="1760.50" y1="975.50" x2="1760.50" y2="988.50" stroke="#333" stroke-width="1.4"/><polygon points="1758.30,976.50 1760.50,973.00 1762.70,976.50" fill="#333"/><path d="M1776.5 973.8H1787M1774.1 976.5V987M1789.4 976.5V981.5M1776.5 989.4H1782" fill="none" stroke="#555" stroke-width="1.3" stroke-linejoin="round" stroke-linecap="round"/><rect x="1772.05" y="972.10" width="3.40" height="3.40" fill="#1a8ae0" rx="0.8"/><rect x="1788.20" y="972.10" width="3.40" height="3.40" fill="#1a8ae0" rx="0.8"/><rect x="1772.05" y="988.05" width="3.40" height="3.40" fill="#1a8ae0" rx="0.8"/><line x1="1790.30" y1="984.90" x2="1784.60" y2="990.60" stroke="#f8c040" stroke-width="3.6"/><line x1="1790.60" y1="984.60" x2="1789.80" y2="985.40" stroke="#e83030" stroke-width="3.6"/><polygon points="1783.20,992.00 1783.60,989.60 1785.60,991.40" fill="#555"/><polygon points="1802.40,988.50 1813.90,988.50 1817.40,984.75 1817.40,988.50 1813.90,992.30 1802.40,992.30" fill="#c4c4c4"/><polygon points="1802.40,976.60 1805.90,972.25 1817.40,972.25 1813.90,976.60" fill="#8ccbf7"/><polygon points="1813.90,976.60 1817.40,972.25 1817.40,984.15 1813.90,988.50" fill="#4a94cf"/><polygon points="1802.40,976.60 1813.90,976.60 1813.90,988.50 1802.40,988.50" fill="#6aafe3"/><line x1="1820.50" y1="975.50" x2="1820.50" y2="988.50" stroke="#333" stroke-width="1.4"/><polygon points="1818.30,976.50 1820.50,973.00 1822.70,976.50" fill="#333"/><path d="M1832.9 991.5V977.7Q1832.9 972.6 1837.4 972.6H1844Q1852.4 976 1852.4 985Q1852.4 990 1848.2 991.5Z" fill="#dcdcdc" stroke="#777" stroke-width="1.5" stroke-linejoin="round" stroke-linecap="round"/><path d="M1841.1 975.4L1844.9 972.6Q1851 974.5 1852.4 980L1849.3 983.3Q1847 977 1841.1 975.4Z" fill="#66b0e8"/><path d="M1850 965.3H1864.5V970L1859 974H1855.5L1850 970Z" fill="#555555"/><rect x="1856.20" y="972.00" width="2.60" height="33.00" fill="#555555"/><rect x="1891.70" y="973.70" width="4.6" height="5.2" fill="#8a8a8a" transform="rotate(0 1894 984.1)"/><rect x="1891.70" y="973.70" width="4.6" height="5.2" fill="#8a8a8a" transform="rotate(45 1894 984.1)"/><rect x="1891.70" y="973.70" width="4.6" height="5.2" fill="#8a8a8a" transform="rotate(90 1894 984.1)"/><rect x="1891.70" y="973.70" width="4.6" height="5.2" fill="#8a8a8a" transform="rotate(135 1894 984.1)"/><rect x="1891.70" y="973.70" width="4.6" height="5.2" fill="#8a8a8a" transform="rotate(180 1894 984.1)"/><rect x="1891.70" y="973.70" width="4.6" height="5.2" fill="#8a8a8a" transform="rotate(225 1894 984.1)"/><rect x="1891.70" y="973.70" width="4.6" height="5.2" fill="#8a8a8a" transform="rotate(270 1894 984.1)"/><rect x="1891.70" y="973.70" width="4.6" height="5.2" fill="#8a8a8a" transform="rotate(315 1894 984.1)"/><circle cx="1894.00" cy="984.10" r="7.60" fill="#8a8a8a"/><circle cx="1894.00" cy="984.10" r="3.20" fill="#f1f1f1"/></svg>
<span class="t" style="left:27.50px;top:6.53px;font-size:15.5px;color:#747474;font-weight:normal;transform:scaleX(0.9428)">Autodesk Fusion 360 (Personal - Not for Commercial Use)</span>
<span class="t" style="left:843.10px;top:44.43px;font-size:15.5px;color:#444444;font-weight:normal;transform:scaleX(0.9557)">Smart Grocery Cart v9*</span>
<span class="t" style="left:1670.00px;top:41.70px;font-size:14.0px;color:#444444;font-weight:normal;transform:scaleX(0.9877)">5 of 10</span>
<span class="t" style="left:188.00px;top:75.58px;font-size:14.5px;color:#1a9ad9;font-weight:normal;transform:scaleX(0.8596)">SOLID</span>
<span class="t" style="left:285.30px;top:75.58px;font-size:14.5px;color:#3e3e3e;font-weight:normal;transform:scaleX(0.8487)">SURFACE</span>
<span class="t" style="left:400.46px;top:75.58px;font-size:14.5px;color:#3e3e3e;font-weight:normal;transform:scaleX(0.8411)">MESH</span>
<span class="t" style="left:492.50px;top:75.58px;font-size:14.5px;color:#3e3e3e;font-weight:normal;transform:scaleX(0.8486)">SHEET METAL</span>
<span class="t" style="left:632.86px;top:75.58px;font-size:14.5px;color:#3e3e3e;font-weight:normal;transform:scaleX(0.8904)">PLASTIC</span>
<span class="t" style="left:742.92px;top:75.58px;font-size:14.5px;color:#3e3e3e;font-weight:normal;transform:scaleX(0.8332)">UTILITIES</span>
<span class="t" style="left:51.55px;top:112.65px;font-size:15.0px;color:#3a3a3a;font-weight:bold;transform:scaleX(0.8513)">DESIGN</span>
<span class="t" style="left:294.10px;top:151.80px;font-size:14.0px;color:#3e3e3e;font-weight:normal;transform:scaleX(0.8627)">CREATE</span>
<span class="t" style="left:627.87px;top:151.80px;font-size:14.0px;color:#3e3e3e;font-weight:normal;transform:scaleX(0.8779)">MODIFY</span>
<span class="t" style="left:848.75px;top:151.80px;font-size:14.0px;color:#3e3e3e;font-weight:normal;transform:scaleX(0.9150)">ASSEMBLE</span>
<span class="t" style="left:967.50px;top:151.80px;font-size:14.0px;color:#3e3e3e;font-weight:normal;transform:scaleX(0.8774)">CONSTRUCT</span>
<span class="t" style="left:1090.40px;top:151.80px;font-size:14.0px;color:#3e3e3e;font-weight:normal;transform:scaleX(0.8524)">INSPECT</span>
<span class="t" style="left:1189.13px;top:151.80px;font-size:14.0px;color:#3e3e3e;font-weight:normal;transform:scaleX(0.8658)">INSERT</span>
<span class="t" style="left:1276.25px;top:151.80px;font-size:14.0px;color:#3e3e3e;font-weight:normal;transform:scaleX(0.8650)">SELECT</span>
<span class="t" style="left:35.59px;top:188.10px;font-size:14.0px;color:#555555;font-weight:normal;transform:scaleX(0.9126)">BROWSER</span>
<span class="t" style="left:36.25px;top:924.30px;font-size:14.0px;color:#555555;font-weight:normal;transform:scaleX(0.8700)">COMMENTS</span>
<span class="t" style="left:123.90px;top:223.00px;font-size:14.0px;color:#f8f8f8;font-weight:normal;transform:scaleX(1.0703);-webkit-text-stroke:0.45px #f8f8f8">Smart Grocery Cart v9</span>
<span class="t" style="left:112.79px;top:252.90px;font-size:14.0px;color:#3a3a3a;font-weight:normal;transform:scaleX(0.9571)">Document Settings</span>
<span class="t" style="left:112.76px;top:282.90px;font-size:14.0px;color:#3a3a3a;font-weight:normal;transform:scaleX(0.9910)">Named Views</span>
<span class="t" style="left:145.40px;top:312.90px;font-size:14.0px;color:#3a3a3a;font-weight:normal;transform:scaleX(0.9382)">Origin</span>
<span class="t" style="left:145.40px;top:342.90px;font-size:14.0px;color:#3a3a3a;font-weight:normal;transform:scaleX(0.9956)">Analysis</span>
<span class="t" style="left:144.45px;top:372.90px;font-size:14.0px;color:#3a3a3a;font-weight:normal;transform:scaleX(0.9544)">Bodies</span>
<span class="t" style="left:166.74px;top:402.90px;font-size:14.0px;color:#3a3a3a;font-weight:normal;transform:scaleX(0.9638)">Body1</span>
<span class="t" style="left:166.73px;top:432.90px;font-size:14.0px;color:#3a3a3a;font-weight:normal;transform:scaleX(0.9715)">Body2</span>
<span class="t" style="left:166.73px;top:462.90px;font-size:14.0px;color:#3a3a3a;font-weight:normal;transform:scaleX(0.9715)">Body5</span>
<span class="t" style="left:166.73px;top:492.90px;font-size:14.0px;color:#3a3a3a;font-weight:normal;transform:scaleX(0.9715)">Body6</span>
<span class="t" style="left:145.20px;top:522.90px;font-size:14.0px;color:#3a3a3a;font-weight:normal;transform:scaleX(0.9586)">Sketches</span>
<span class="t" style="left:145.20px;top:552.90px;font-size:14.0px;color:#3a3a3a;font-weight:normal;transform:scaleX(0.9665)">Construction</span>
</body></html>
